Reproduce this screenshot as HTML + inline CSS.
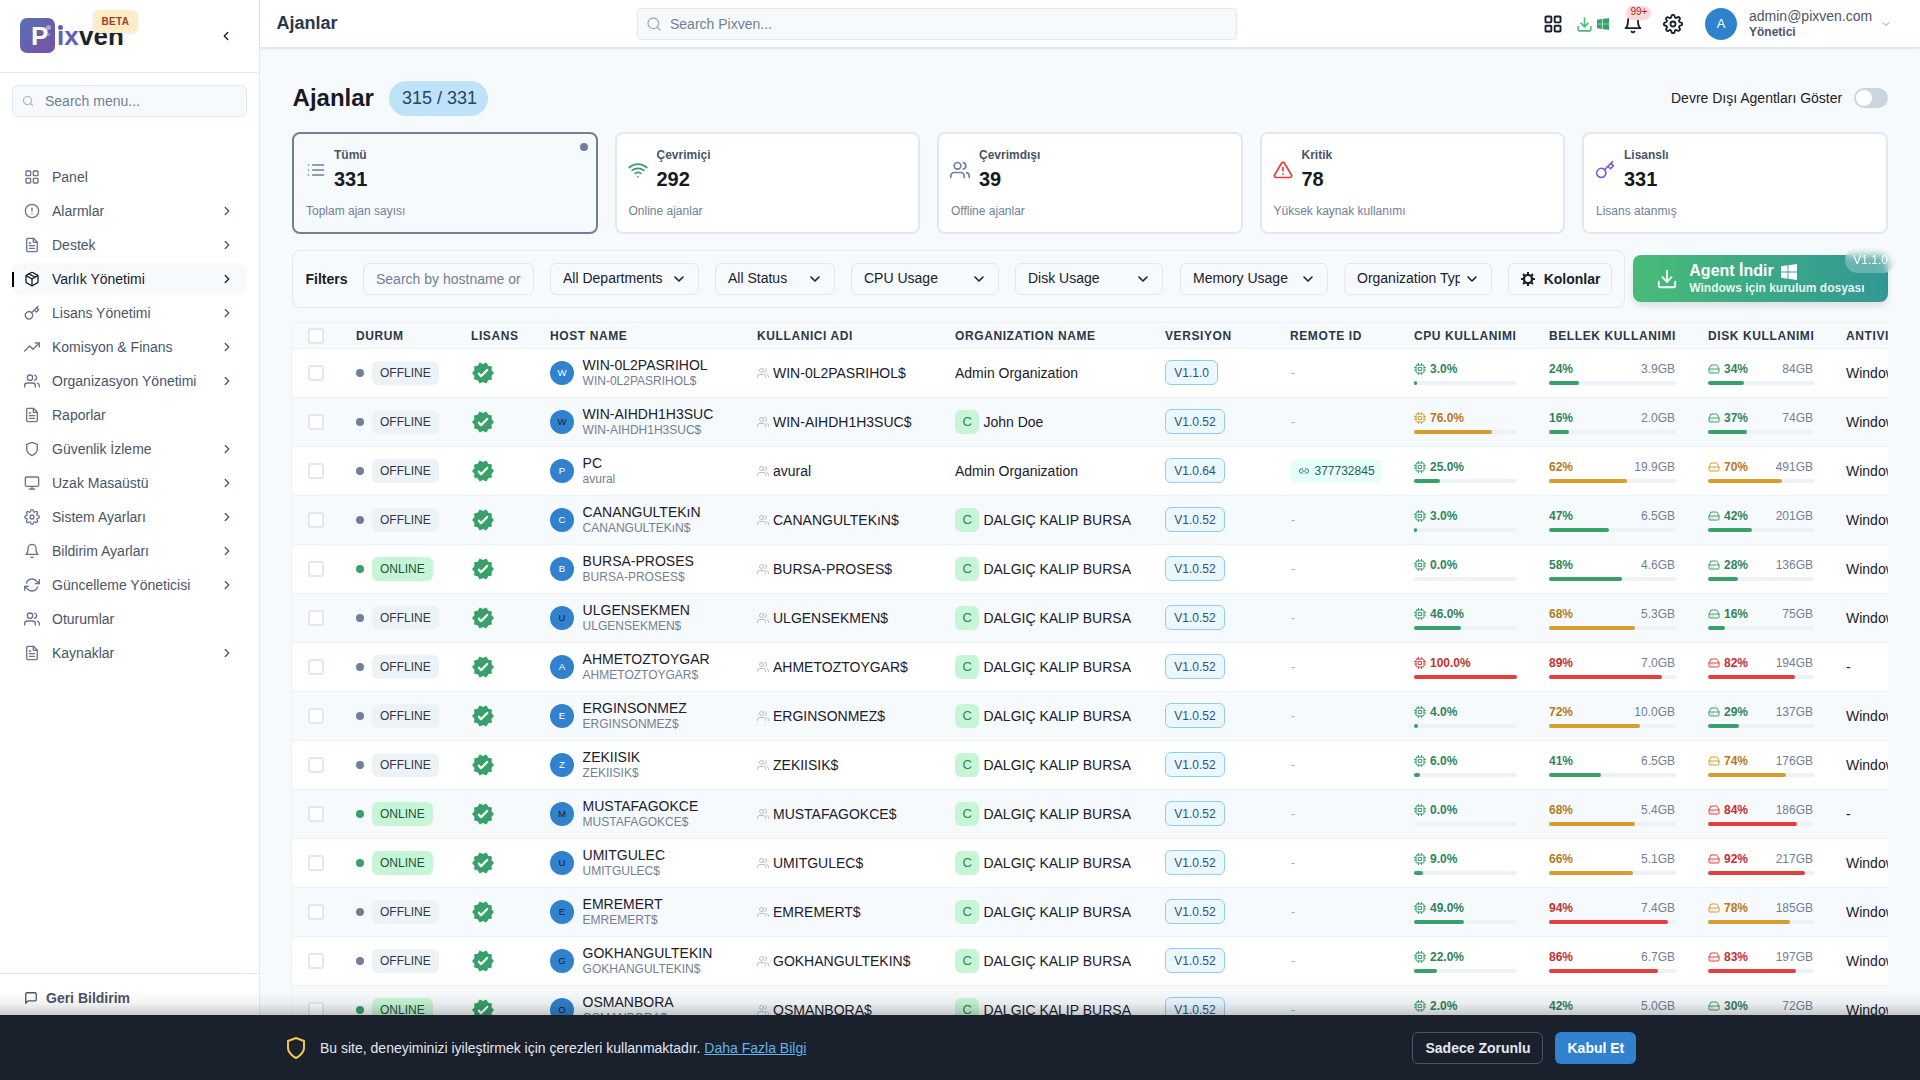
<!DOCTYPE html>
<html><head><meta charset="utf-8">
<style>
*{box-sizing:border-box;margin:0;padding:0}
html,body{width:1920px;height:1080px;overflow:hidden}
body{font-family:"Liberation Sans",sans-serif;background:#f7fafc;color:#1a202c;position:relative}
.a{position:absolute;display:block}
.t{position:absolute;white-space:nowrap}
.b{position:absolute}
</style></head><body>

<div class="b" style="left:0;top:0;width:260px;height:1080px;background:#fff;border-right:1px solid #e2e8f0"></div>
<div class="b" style="left:20px;top:18px;width:35px;height:35px;border-radius:7px;background:linear-gradient(135deg,#5a70b8 0%,#7551a2 100%)"></div>
<div class="t" style="left:31px;top:22.99px;font-size:26px;line-height:26px;font-weight:700;color:#fff;">P</div>
<div class="b" style="left:46px;top:25px;width:5px;height:5px;border-radius:50%;background:rgba(255,255,255,.45)"></div>
<div class="b" style="left:47px;top:33px;width:3px;height:3px;border-radius:50%;background:rgba(255,255,255,.3)"></div>
<div class="t" style="left:57px;top:22.99px;font-size:26px;line-height:26px;font-weight:700;color:#222;letter-spacing:0.1px"><span style="color:#5b62b5">ıx</span><span style="color:#232323">ven</span></div>
<div class="b" style="left:58.2px;top:25.2px;width:4.6px;height:4.6px;border-radius:50%;background:#5b62b5"></div>
<div class="b" style="left:93px;top:10px;width:45px;height:23px;border-radius:6px;background:#feebc8;box-shadow:0 1px 3px rgba(0,0,0,.08)"></div>
<div class="t" style="left:101.5px;top:16.54px;font-size:10px;line-height:10px;font-weight:700;color:#9c4221;letter-spacing:0.3px">BETA</div>
<svg class="a" style="left:219px;top:29px;" width="14" height="14" viewBox="0 0 24 24" fill="none" stroke="#1a202c" stroke-width="2.4" stroke-linecap="round" stroke-linejoin="round"><path d="M15 18l-6-6 6-6"/></svg>
<div class="b" style="left:0;top:72px;width:259px;height:1px;background:#e2e8f0"></div>
<div class="b" style="left:12px;top:85px;width:235px;height:32px;border:1px solid #e2e8f0;border-radius:6px;background:#f7fafc"></div>
<svg class="a" style="left:22px;top:95px;" width="12" height="12" viewBox="0 0 24 24" fill="none" stroke="#a0aec0" stroke-width="2.2" stroke-linecap="round" stroke-linejoin="round"><circle cx="11" cy="11" r="8"/><path d="M21 21l-4.35-4.35"/></svg>
<div class="t" style="left:45px;top:94.15px;font-size:14px;line-height:14px;font-weight:400;color:#718096;">Search menu...</div>
<svg class="a" style="left:24px;top:169px;" width="16" height="16" viewBox="0 0 24 24" fill="none" stroke="#66758f" stroke-width="2" stroke-linecap="round" stroke-linejoin="round"><rect x="3" y="3" width="7" height="7" rx="1"/><rect x="14" y="3" width="7" height="7" rx="1"/><rect x="14" y="14" width="7" height="7" rx="1"/><rect x="3" y="14" width="7" height="7" rx="1"/></svg>
<div class="t" style="left:52px;top:170.15px;font-size:14px;line-height:14px;font-weight:400;color:#4a5568;">Panel</div>
<svg class="a" style="left:24px;top:203px;" width="16" height="16" viewBox="0 0 24 24" fill="none" stroke="#66758f" stroke-width="2" stroke-linecap="round" stroke-linejoin="round"><circle cx="12" cy="12" r="10"/><path d="M12 8v4"/><path d="M12 16h.01"/></svg>
<div class="t" style="left:52px;top:204.15px;font-size:14px;line-height:14px;font-weight:400;color:#4a5568;">Alarmlar</div>
<svg class="a" style="left:220px;top:204px;" width="14" height="14" viewBox="0 0 24 24" fill="none" stroke="#4a5568" stroke-width="2.2" stroke-linecap="round" stroke-linejoin="round"><path d="M9 18l6-6-6-6"/></svg>
<svg class="a" style="left:24px;top:237px;" width="16" height="16" viewBox="0 0 24 24" fill="none" stroke="#66758f" stroke-width="2" stroke-linecap="round" stroke-linejoin="round"><path d="M14 2H6a2 2 0 0 0-2 2v16a2 2 0 0 0 2 2h12a2 2 0 0 0 2-2V8z"/><path d="M14 2v6h6"/><path d="M16 13H8"/><path d="M16 17H8"/><path d="M10 9H8"/></svg>
<div class="t" style="left:52px;top:238.15px;font-size:14px;line-height:14px;font-weight:400;color:#4a5568;">Destek</div>
<svg class="a" style="left:220px;top:238px;" width="14" height="14" viewBox="0 0 24 24" fill="none" stroke="#4a5568" stroke-width="2.2" stroke-linecap="round" stroke-linejoin="round"><path d="M9 18l6-6-6-6"/></svg>
<div class="b" style="left:12px;top:263px;width:235px;height:32px;border-radius:8px;background:#f7fafc"></div>
<div class="b" style="left:12px;top:272px;width:2px;height:15px;background:#000"></div>
<svg class="a" style="left:24px;top:271px;" width="16" height="16" viewBox="0 0 24 24" fill="none" stroke="#1a202c" stroke-width="2" stroke-linecap="round" stroke-linejoin="round"><path d="M16.5 9.4l-9-5.19"/><path d="M21 16V8a2 2 0 0 0-1-1.73l-7-4a2 2 0 0 0-2 0l-7 4A2 2 0 0 0 3 8v8a2 2 0 0 0 1 1.73l7 4a2 2 0 0 0 2 0l7-4A2 2 0 0 0 21 16z"/><path d="M3.27 6.96L12 12.01l8.73-5.05"/><path d="M12 22.08V12"/></svg>
<div class="t" style="left:52px;top:272.15px;font-size:14px;line-height:14px;font-weight:400;color:#1a202c;">Varlık Yönetimi</div>
<svg class="a" style="left:220px;top:272px;" width="14" height="14" viewBox="0 0 24 24" fill="none" stroke="#1a202c" stroke-width="2.2" stroke-linecap="round" stroke-linejoin="round"><path d="M9 18l6-6-6-6"/></svg>
<svg class="a" style="left:24px;top:305px;" width="16" height="16" viewBox="0 0 24 24" fill="none" stroke="#66758f" stroke-width="2" stroke-linecap="round" stroke-linejoin="round"><path d="M21 2l-2 2m-7.61 7.61a5.5 5.5 0 1 1-7.778 7.778 5.5 5.5 0 0 1 7.777-7.777zm0 0L15.5 7.5m0 0l3 3L22 7l-3-3m-3.5 3.5L19 4"/></svg>
<div class="t" style="left:52px;top:306.15px;font-size:14px;line-height:14px;font-weight:400;color:#4a5568;">Lisans Yönetimi</div>
<svg class="a" style="left:220px;top:306px;" width="14" height="14" viewBox="0 0 24 24" fill="none" stroke="#4a5568" stroke-width="2.2" stroke-linecap="round" stroke-linejoin="round"><path d="M9 18l6-6-6-6"/></svg>
<svg class="a" style="left:24px;top:339px;" width="16" height="16" viewBox="0 0 24 24" fill="none" stroke="#66758f" stroke-width="2" stroke-linecap="round" stroke-linejoin="round"><path d="M23 6l-9.5 9.5-5-5L1 18"/><path d="M17 6h6v6"/></svg>
<div class="t" style="left:52px;top:340.15px;font-size:14px;line-height:14px;font-weight:400;color:#4a5568;">Komisyon &amp; Finans</div>
<svg class="a" style="left:220px;top:340px;" width="14" height="14" viewBox="0 0 24 24" fill="none" stroke="#4a5568" stroke-width="2.2" stroke-linecap="round" stroke-linejoin="round"><path d="M9 18l6-6-6-6"/></svg>
<svg class="a" style="left:24px;top:373px;" width="16" height="16" viewBox="0 0 24 24" fill="none" stroke="#66758f" stroke-width="2" stroke-linecap="round" stroke-linejoin="round"><path d="M17 21v-2a4 4 0 0 0-4-4H5a4 4 0 0 0-4 4v2"/><circle cx="9" cy="7" r="4"/><path d="M23 21v-2a4 4 0 0 0-3-3.87"/><path d="M16 3.13a4 4 0 0 1 0 7.75"/></svg>
<div class="t" style="left:52px;top:374.15px;font-size:14px;line-height:14px;font-weight:400;color:#4a5568;">Organizasyon Yönetimi</div>
<svg class="a" style="left:220px;top:374px;" width="14" height="14" viewBox="0 0 24 24" fill="none" stroke="#4a5568" stroke-width="2.2" stroke-linecap="round" stroke-linejoin="round"><path d="M9 18l6-6-6-6"/></svg>
<svg class="a" style="left:24px;top:407px;" width="16" height="16" viewBox="0 0 24 24" fill="none" stroke="#66758f" stroke-width="2" stroke-linecap="round" stroke-linejoin="round"><path d="M14 2H6a2 2 0 0 0-2 2v16a2 2 0 0 0 2 2h12a2 2 0 0 0 2-2V8z"/><path d="M14 2v6h6"/><path d="M16 13H8"/><path d="M16 17H8"/><path d="M10 9H8"/></svg>
<div class="t" style="left:52px;top:408.15px;font-size:14px;line-height:14px;font-weight:400;color:#4a5568;">Raporlar</div>
<svg class="a" style="left:24px;top:441px;" width="16" height="16" viewBox="0 0 24 24" fill="none" stroke="#66758f" stroke-width="2" stroke-linecap="round" stroke-linejoin="round"><path d="M12 22s8-4 8-10V5l-8-3-8 3v7c0 6 8 10 8 10z"/></svg>
<div class="t" style="left:52px;top:442.15px;font-size:14px;line-height:14px;font-weight:400;color:#4a5568;">Güvenlik İzleme</div>
<svg class="a" style="left:220px;top:442px;" width="14" height="14" viewBox="0 0 24 24" fill="none" stroke="#4a5568" stroke-width="2.2" stroke-linecap="round" stroke-linejoin="round"><path d="M9 18l6-6-6-6"/></svg>
<svg class="a" style="left:24px;top:475px;" width="16" height="16" viewBox="0 0 24 24" fill="none" stroke="#66758f" stroke-width="2" stroke-linecap="round" stroke-linejoin="round"><rect x="2" y="3" width="20" height="14" rx="2"/><path d="M8 21h8"/><path d="M12 17v4"/></svg>
<div class="t" style="left:52px;top:476.15px;font-size:14px;line-height:14px;font-weight:400;color:#4a5568;">Uzak Masaüstü</div>
<svg class="a" style="left:220px;top:476px;" width="14" height="14" viewBox="0 0 24 24" fill="none" stroke="#4a5568" stroke-width="2.2" stroke-linecap="round" stroke-linejoin="round"><path d="M9 18l6-6-6-6"/></svg>
<svg class="a" style="left:24px;top:509px;" width="16" height="16" viewBox="0 0 24 24" fill="none" stroke="#66758f" stroke-width="2" stroke-linecap="round" stroke-linejoin="round"><circle cx="12" cy="12" r="3"/><path d="M19.4 15a1.65 1.65 0 0 0 .33 1.820l.06.06a2 2 0 0 1 0 2.83 2 2 0 0 1-2.83 0l-.06-.06a1.65 1.65 0 0 0-1.82-.33 1.65 1.65 0 0 0-1 1.51V21a2 2 0 0 1-2 2 2 2 0 0 1-2-2v-.09A1.65 1.65 0 0 0 9 19.4a1.65 1.65 0 0 0-1.82.33l-.06.06a2 2 0 0 1-2.83 0 2 2 0 0 1 0-2.83l.06-.06a1.650 1.65 0 0 0 .33-1.82 1.65 1.65 0 0 0-1.51-1H3a2 2 0 0 1-2-2 2 2 0 0 1 2-2h.09A1.65 1.65 0 0 0 4.600 9a1.65 1.65 0 0 0-.33-1.82l-.06-.06a2 2 0 0 1 0-2.83 2 2 0 0 1 2.830 0l.06.06a1.65 1.65 0 0 0 1.82.33H9a1.65 1.65 0 0 0 1-1.51V3a2 2 0 0 1 2-2 2 2 0 0 1 2 2v.09a1.65 1.65 0 0 0 1 1.51 1.65 1.65 0 0 0 1.82-.33l.06-.06a2 2 0 0 1 2.83 0 2 2 0 0 1 0 2.83l-.06.06a1.65 1.65 0 0 0-.33 1.82V9a1.65 1.65 0 0 0 1.51 1H21a2 2 0 0 1 2 2 2 2 0 0 1-2 2h-.09a1.65 1.65 0 0 0-1.51 1z"/></svg>
<div class="t" style="left:52px;top:510.15px;font-size:14px;line-height:14px;font-weight:400;color:#4a5568;">Sistem Ayarları</div>
<svg class="a" style="left:220px;top:510px;" width="14" height="14" viewBox="0 0 24 24" fill="none" stroke="#4a5568" stroke-width="2.2" stroke-linecap="round" stroke-linejoin="round"><path d="M9 18l6-6-6-6"/></svg>
<svg class="a" style="left:24px;top:543px;" width="16" height="16" viewBox="0 0 24 24" fill="none" stroke="#66758f" stroke-width="2" stroke-linecap="round" stroke-linejoin="round"><path d="M18 8A6 6 0 0 0 6 8c0 7-3 9-3 9h18s-3-2-3-9"/><path d="M13.73 21a2 2 0 0 1-3.46 0"/></svg>
<div class="t" style="left:52px;top:544.15px;font-size:14px;line-height:14px;font-weight:400;color:#4a5568;">Bildirim Ayarları</div>
<svg class="a" style="left:220px;top:544px;" width="14" height="14" viewBox="0 0 24 24" fill="none" stroke="#4a5568" stroke-width="2.2" stroke-linecap="round" stroke-linejoin="round"><path d="M9 18l6-6-6-6"/></svg>
<svg class="a" style="left:24px;top:577px;" width="16" height="16" viewBox="0 0 24 24" fill="none" stroke="#66758f" stroke-width="2" stroke-linecap="round" stroke-linejoin="round"><path d="M23 4v6h-6"/><path d="M1 20v-6h6"/><path d="M3.51 9a9 9 0 0 1 14.85-3.36L23 10M1 14l4.64 4.36A9 9 0 0 0 20.49 15"/></svg>
<div class="t" style="left:52px;top:578.15px;font-size:14px;line-height:14px;font-weight:400;color:#4a5568;">Güncelleme Yöneticisi</div>
<svg class="a" style="left:220px;top:578px;" width="14" height="14" viewBox="0 0 24 24" fill="none" stroke="#4a5568" stroke-width="2.2" stroke-linecap="round" stroke-linejoin="round"><path d="M9 18l6-6-6-6"/></svg>
<svg class="a" style="left:24px;top:611px;" width="16" height="16" viewBox="0 0 24 24" fill="none" stroke="#66758f" stroke-width="2" stroke-linecap="round" stroke-linejoin="round"><path d="M17 21v-2a4 4 0 0 0-4-4H5a4 4 0 0 0-4 4v2"/><circle cx="9" cy="7" r="4"/><path d="M23 21v-2a4 4 0 0 0-3-3.87"/><path d="M16 3.13a4 4 0 0 1 0 7.75"/></svg>
<div class="t" style="left:52px;top:612.15px;font-size:14px;line-height:14px;font-weight:400;color:#4a5568;">Oturumlar</div>
<svg class="a" style="left:24px;top:645px;" width="16" height="16" viewBox="0 0 24 24" fill="none" stroke="#66758f" stroke-width="2" stroke-linecap="round" stroke-linejoin="round"><path d="M14 2H6a2 2 0 0 0-2 2v16a2 2 0 0 0 2 2h12a2 2 0 0 0 2-2V8z"/><path d="M14 2v6h6"/><path d="M16 13H8"/><path d="M16 17H8"/><path d="M10 9H8"/></svg>
<div class="t" style="left:52px;top:646.15px;font-size:14px;line-height:14px;font-weight:400;color:#4a5568;">Kaynaklar</div>
<svg class="a" style="left:220px;top:646px;" width="14" height="14" viewBox="0 0 24 24" fill="none" stroke="#4a5568" stroke-width="2.2" stroke-linecap="round" stroke-linejoin="round"><path d="M9 18l6-6-6-6"/></svg>
<div class="b" style="left:0;top:973px;width:259px;height:1px;background:#e2e8f0"></div>
<svg class="a" style="left:24px;top:991px;" width="14" height="14" viewBox="0 0 24 24" fill="none" stroke="#4a5568" stroke-width="2.2" stroke-linecap="round" stroke-linejoin="round"><path d="M21 15a2 2 0 0 1-2 2H7l-4 4V5a2 2 0 0 1 2-2h14a2 2 0 0 1 2 2z"/></svg>
<div class="t" style="left:46px;top:991.15px;font-size:14px;line-height:14px;font-weight:700;color:#4a5568;">Geri Bildirim</div>
<div class="b" style="left:260px;top:0;width:1660px;height:48px;background:#fff;border-bottom:1px solid #e2e8f0;box-shadow:0 1px 2px rgba(0,0,0,.09)"></div>
<div class="t" style="left:276.5px;top:13.96px;font-size:18px;line-height:18px;font-weight:700;color:#2d3748;">Ajanlar</div>
<div class="b" style="left:637px;top:8px;width:600px;height:32px;border:1px solid #e2e8f0;border-radius:4px;background:#f7fafc"></div>
<svg class="a" style="left:646px;top:16px;" width="16" height="16" viewBox="0 0 24 24" fill="none" stroke="#a0aec0" stroke-width="2" stroke-linecap="round" stroke-linejoin="round"><circle cx="11" cy="11" r="8"/><path d="M21 21l-4.35-4.35"/></svg>
<div class="t" style="left:670px;top:17.15px;font-size:14px;line-height:14px;font-weight:400;color:#718096;">Search Pixven...</div>
<svg class="a" style="left:1543px;top:14.3px;" width="20" height="20" viewBox="0 0 24 24" fill="none" stroke="#1a202c" stroke-width="2.3" stroke-linecap="round" stroke-linejoin="round"><rect x="3" y="3" width="7" height="7" rx="1"/><rect x="14" y="3" width="7" height="7" rx="1"/><rect x="14" y="14" width="7" height="7" rx="1"/><rect x="3" y="14" width="7" height="7" rx="1"/></svg>
<svg class="a" style="left:1576px;top:16px;" width="17" height="17" viewBox="0 0 24 24" fill="none" stroke="#48bb78" stroke-width="2.2" stroke-linecap="round" stroke-linejoin="round"><path d="M21 15v4a2 2 0 0 1-2 2H5a2 2 0 0 1-2-2v-4"/><path d="M7 10l5 5 5-5"/><path d="M12 15V3"/></svg>
<svg class="a" style="left:1597px;top:18px" width="12" height="12" viewBox="0 0 12 12"><path fill="#38a169" d="M0 1.7L4.9 1v4.7H0zM5.6.9L12 0v5.7H5.6zM0 6.3h4.9V11L0 10.3zM5.6 6.3H12V12l-6.4-.9z"/></svg>
<svg class="a" style="left:1623px;top:14.1px;" width="20" height="20" viewBox="0 0 24 24" fill="none" stroke="#1a202c" stroke-width="2.2" stroke-linecap="round" stroke-linejoin="round"><path d="M18 8A6 6 0 0 0 6 8c0 7-3 9-3 9h18s-3-2-3-9"/><path d="M13.73 21a2 2 0 0 1-3.46 0"/></svg>
<div class="b" style="left:1626px;top:6px;width:25px;height:14px;border-radius:7px;background:#fed7d7"></div>
<div class="t" style="left:1630.5px;top:7.34px;font-size:10px;line-height:10px;font-weight:400;color:#9b2c2c;">99+</div>
<svg class="a" style="left:1663px;top:14px;" width="20" height="20" viewBox="0 0 24 24" fill="none" stroke="#1a202c" stroke-width="2.2" stroke-linecap="round" stroke-linejoin="round"><circle cx="12" cy="12" r="3"/><path d="M19.4 15a1.65 1.65 0 0 0 .33 1.820l.06.06a2 2 0 0 1 0 2.83 2 2 0 0 1-2.83 0l-.06-.06a1.65 1.65 0 0 0-1.82-.33 1.65 1.65 0 0 0-1 1.51V21a2 2 0 0 1-2 2 2 2 0 0 1-2-2v-.09A1.65 1.65 0 0 0 9 19.4a1.65 1.65 0 0 0-1.82.33l-.06.06a2 2 0 0 1-2.83 0 2 2 0 0 1 0-2.83l.06-.06a1.650 1.65 0 0 0 .33-1.82 1.65 1.65 0 0 0-1.51-1H3a2 2 0 0 1-2-2 2 2 0 0 1 2-2h.09A1.65 1.65 0 0 0 4.600 9a1.65 1.65 0 0 0-.33-1.82l-.06-.06a2 2 0 0 1 0-2.83 2 2 0 0 1 2.830 0l.06.06a1.65 1.65 0 0 0 1.82.33H9a1.65 1.65 0 0 0 1-1.51V3a2 2 0 0 1 2-2 2 2 0 0 1 2 2v.09a1.65 1.65 0 0 0 1 1.51 1.65 1.65 0 0 0 1.82-.33l.06-.06a2 2 0 0 1 2.83 0 2 2 0 0 1 0 2.83l-.06.06a1.65 1.65 0 0 0-.33 1.82V9a1.65 1.65 0 0 0 1.51 1H21a2 2 0 0 1 2 2 2 2 0 0 1-2 2h-.09a1.65 1.65 0 0 0-1.51 1z"/></svg>
<div class="b" style="left:1705px;top:8px;width:32px;height:32px;border-radius:50%;background:#3182ce"></div>
<div class="t" style="left:1716.8px;top:16.50px;font-size:13px;line-height:13px;font-weight:400;color:#fff;">A</div>
<div class="t" style="left:1749px;top:9.15px;font-size:14px;line-height:14px;font-weight:400;color:#4a5568;">admin@pixven.com</div>
<div class="t" style="left:1749px;top:25.54px;font-size:12px;line-height:12px;font-weight:700;color:#4a5568;">Yönetici</div>
<svg class="a" style="left:1880px;top:18px;" width="12" height="12" viewBox="0 0 24 24" fill="none" stroke="#718096" stroke-width="1.6" stroke-linecap="round" stroke-linejoin="round"><path d="M6 9l6 6 6-6"/></svg>
<div class="t" style="left:292.6px;top:85.68px;font-size:24px;line-height:24px;font-weight:700;color:#171923;">Ajanlar</div>
<div class="b" style="left:389px;top:81px;width:99px;height:35px;border-radius:18px;background:#bee3f8"></div>
<div class="t" style="left:402px;top:88.76px;font-size:18px;line-height:18px;font-weight:400;color:#2a4365;">315 / 331</div>
<div class="t" style="left:1671px;top:91.15px;font-size:14px;line-height:14px;font-weight:400;color:#1a202c;">Devre Dışı Agentları Göster</div>
<div class="b" style="left:1854px;top:88px;width:34px;height:20px;border-radius:10px;background:#cbd5e0"></div>
<div class="b" style="left:1856px;top:90px;width:16px;height:16px;border-radius:50%;background:#fff"></div>
<div class="b" style="left:292.0px;top:132px;width:305.5px;height:101.5px;border:2px solid #718096;border-radius:8px;background:#f7fafc"></div>
<div class="b" style="left:580.0px;top:143px;width:8px;height:8px;border-radius:50%;background:#718096"></div>
<svg class="a" style="left:306.0px;top:160px;" width="20" height="20" viewBox="0 0 24 24" fill="none" stroke="#718096" stroke-width="2" stroke-linecap="round" stroke-linejoin="round"><path d="M8 6h13"/><path d="M8 12h13"/><path d="M8 18h13"/><path d="M3 6h.01"/><path d="M3 12h.01"/><path d="M3 18h.01"/></svg>
<div class="t" style="left:334.0px;top:148.84px;font-size:12px;line-height:12px;font-weight:700;color:#4a5568;">Tümü</div>
<div class="t" style="left:334.0px;top:169.07px;font-size:20px;line-height:20px;font-weight:700;color:#171923;">331</div>
<div class="t" style="left:306.0px;top:204.54px;font-size:12px;line-height:12px;font-weight:400;color:#718096;">Toplam ajan sayısı</div>
<div class="b" style="left:614.5px;top:132px;width:305.5px;height:101.5px;border:2px solid #e2e8f0;border-radius:8px;background:#fff"></div>
<svg class="a" style="left:627.5px;top:160px;" width="20" height="20" viewBox="0 0 24 24" fill="none" stroke="#38a169" stroke-width="2" stroke-linecap="round" stroke-linejoin="round"><path d="M5 12.55a11 11 0 0 1 14.08 0"/><path d="M1.42 9a16 16 0 0 1 21.16 0"/><path d="M8.53 16.11a6 6 0 0 1 6.95 0"/><path d="M12 20h.01"/></svg>
<div class="t" style="left:656.5px;top:148.84px;font-size:12px;line-height:12px;font-weight:700;color:#4a5568;">Çevrimiçi</div>
<div class="t" style="left:656.5px;top:169.07px;font-size:20px;line-height:20px;font-weight:700;color:#171923;">292</div>
<div class="t" style="left:628.5px;top:204.54px;font-size:12px;line-height:12px;font-weight:400;color:#718096;">Online ajanlar</div>
<div class="b" style="left:937.0px;top:132px;width:305.5px;height:101.5px;border:2px solid #e2e8f0;border-radius:8px;background:#fff"></div>
<svg class="a" style="left:950.0px;top:160px;" width="20" height="20" viewBox="0 0 24 24" fill="none" stroke="#718096" stroke-width="2" stroke-linecap="round" stroke-linejoin="round"><path d="M17 21v-2a4 4 0 0 0-4-4H5a4 4 0 0 0-4 4v2"/><circle cx="9" cy="7" r="4"/><path d="M23 21v-2a4 4 0 0 0-3-3.87"/><path d="M16 3.13a4 4 0 0 1 0 7.75"/></svg>
<div class="t" style="left:979.0px;top:148.84px;font-size:12px;line-height:12px;font-weight:700;color:#4a5568;">Çevrimdışı</div>
<div class="t" style="left:979.0px;top:169.07px;font-size:20px;line-height:20px;font-weight:700;color:#171923;">39</div>
<div class="t" style="left:951.0px;top:204.54px;font-size:12px;line-height:12px;font-weight:400;color:#718096;">Offline ajanlar</div>
<div class="b" style="left:1259.5px;top:132px;width:305.5px;height:101.5px;border:2px solid #e2e8f0;border-radius:8px;background:#fff"></div>
<svg class="a" style="left:1272.5px;top:160px;" width="20" height="20" viewBox="0 0 24 24" fill="none" stroke="#e53e3e" stroke-width="2" stroke-linecap="round" stroke-linejoin="round"><path d="M10.29 3.86L1.82 18a2 2 0 0 0 1.71 3h16.94a2 2 0 0 0 1.71-3L13.71 3.86a2 2 0 0 0-3.42 0z"/><path d="M12 9v4"/><path d="M12 17h.01"/></svg>
<div class="t" style="left:1301.5px;top:148.84px;font-size:12px;line-height:12px;font-weight:700;color:#4a5568;">Kritik</div>
<div class="t" style="left:1301.5px;top:169.07px;font-size:20px;line-height:20px;font-weight:700;color:#171923;">78</div>
<div class="t" style="left:1273.5px;top:204.54px;font-size:12px;line-height:12px;font-weight:400;color:#718096;">Yüksek kaynak kullanımı</div>
<div class="b" style="left:1582.0px;top:132px;width:305.5px;height:101.5px;border:2px solid #e2e8f0;border-radius:8px;background:#fff"></div>
<svg class="a" style="left:1595.0px;top:160px;" width="20" height="20" viewBox="0 0 24 24" fill="none" stroke="#805ad5" stroke-width="2" stroke-linecap="round" stroke-linejoin="round"><path d="M21 2l-2 2m-7.61 7.61a5.5 5.5 0 1 1-7.778 7.778 5.5 5.5 0 0 1 7.777-7.777zm0 0L15.5 7.5m0 0l3 3L22 7l-3-3m-3.5 3.5L19 4"/></svg>
<div class="t" style="left:1624.0px;top:148.84px;font-size:12px;line-height:12px;font-weight:700;color:#4a5568;">Lisanslı</div>
<div class="t" style="left:1624.0px;top:169.07px;font-size:20px;line-height:20px;font-weight:700;color:#171923;">331</div>
<div class="t" style="left:1596.0px;top:204.54px;font-size:12px;line-height:12px;font-weight:400;color:#718096;">Lisans atanmış</div>
<div class="b" style="left:292px;top:250px;width:1333px;height:57.5px;border:1px solid #e2e8f0;border-radius:8px;background:#f7fafc"></div>
<div class="t" style="left:305.5px;top:272.35px;font-size:14px;line-height:14px;font-weight:700;color:#1a202c;">Filters</div>
<div class="b" style="left:363px;top:263px;width:171px;height:32px;border:1px solid #e2e8f0;border-radius:6px"></div>
<div class="t" style="left:376px;top:272.15px;font-size:14px;line-height:14px;font-weight:400;color:#718096;">Search by hostname or</div>
<div class="b" style="left:550px;top:263px;width:149px;height:32px;border:1px solid #e2e8f0;border-radius:6px"></div>
<div class="t" style="left:563px;top:268.15px;width:104px;overflow:hidden;font-size:14px;line-height:20px;color:#1a202c">All Departments</div>
<svg class="a" style="left:671px;top:271px;" width="16" height="16" viewBox="0 0 24 24" fill="none" stroke="#1a202c" stroke-width="2.4" stroke-linecap="round" stroke-linejoin="round"><path d="M6 9l6 6 6-6"/></svg>
<div class="b" style="left:715px;top:263px;width:120px;height:32px;border:1px solid #e2e8f0;border-radius:6px"></div>
<div class="t" style="left:728px;top:268.15px;width:75px;overflow:hidden;font-size:14px;line-height:20px;color:#1a202c">All Status</div>
<svg class="a" style="left:807px;top:271px;" width="16" height="16" viewBox="0 0 24 24" fill="none" stroke="#1a202c" stroke-width="2.4" stroke-linecap="round" stroke-linejoin="round"><path d="M6 9l6 6 6-6"/></svg>
<div class="b" style="left:851px;top:263px;width:147.5px;height:32px;border:1px solid #e2e8f0;border-radius:6px"></div>
<div class="t" style="left:864px;top:268.15px;width:102.5px;overflow:hidden;font-size:14px;line-height:20px;color:#1a202c">CPU Usage</div>
<svg class="a" style="left:970.5px;top:271px;" width="16" height="16" viewBox="0 0 24 24" fill="none" stroke="#1a202c" stroke-width="2.4" stroke-linecap="round" stroke-linejoin="round"><path d="M6 9l6 6 6-6"/></svg>
<div class="b" style="left:1015px;top:263px;width:148px;height:32px;border:1px solid #e2e8f0;border-radius:6px"></div>
<div class="t" style="left:1028px;top:268.15px;width:103px;overflow:hidden;font-size:14px;line-height:20px;color:#1a202c">Disk Usage</div>
<svg class="a" style="left:1135px;top:271px;" width="16" height="16" viewBox="0 0 24 24" fill="none" stroke="#1a202c" stroke-width="2.4" stroke-linecap="round" stroke-linejoin="round"><path d="M6 9l6 6 6-6"/></svg>
<div class="b" style="left:1180px;top:263px;width:147.5px;height:32px;border:1px solid #e2e8f0;border-radius:6px"></div>
<div class="t" style="left:1193px;top:268.15px;width:102.5px;overflow:hidden;font-size:14px;line-height:20px;color:#1a202c">Memory Usage</div>
<svg class="a" style="left:1299.5px;top:271px;" width="16" height="16" viewBox="0 0 24 24" fill="none" stroke="#1a202c" stroke-width="2.4" stroke-linecap="round" stroke-linejoin="round"><path d="M6 9l6 6 6-6"/></svg>
<div class="b" style="left:1344px;top:263px;width:147.5px;height:32px;border:1px solid #e2e8f0;border-radius:6px"></div>
<div class="t" style="left:1357px;top:268.15px;width:102.5px;overflow:hidden;font-size:14px;line-height:20px;color:#1a202c">Organization Typ</div>
<svg class="a" style="left:1463.5px;top:271px;" width="16" height="16" viewBox="0 0 24 24" fill="none" stroke="#1a202c" stroke-width="2.4" stroke-linecap="round" stroke-linejoin="round"><path d="M6 9l6 6 6-6"/></svg>
<div class="b" style="left:1508px;top:263px;width:104px;height:32px;border:1px solid #e2e8f0;border-radius:6px"></div>
<svg class="a" style="left:1521px;top:272px" width="14" height="14" viewBox="0 0 14 14"><circle cx="7" cy="7" r="4.1" fill="none" stroke="#1a202c" stroke-width="2.4"/><g fill="#1a202c"><rect x="6" y="0" width="2" height="3" transform="rotate(0 7 7)"/><rect x="6" y="0" width="2" height="3" transform="rotate(45 7 7)"/><rect x="6" y="0" width="2" height="3" transform="rotate(90 7 7)"/><rect x="6" y="0" width="2" height="3" transform="rotate(135 7 7)"/><rect x="6" y="0" width="2" height="3" transform="rotate(180 7 7)"/><rect x="6" y="0" width="2" height="3" transform="rotate(225 7 7)"/><rect x="6" y="0" width="2" height="3" transform="rotate(270 7 7)"/><rect x="6" y="0" width="2" height="3" transform="rotate(315 7 7)"/></g></svg>
<div class="t" style="left:1543.7px;top:272.15px;font-size:14px;line-height:14px;font-weight:700;color:#1a202c;">Kolonlar</div>
<div class="b" style="left:1633px;top:255px;width:255px;height:47px;border-radius:8px;background:linear-gradient(90deg,#48bb78 0%,#319795 100%);box-shadow:0 4px 6px rgba(0,0,0,.1)"></div>
<svg class="a" style="left:1656px;top:268px;" width="22" height="22" viewBox="0 0 24 24" fill="none" stroke="#fff" stroke-width="2" stroke-linecap="round" stroke-linejoin="round"><path d="M21 15v4a2 2 0 0 1-2 2H5a2 2 0 0 1-2-2v-4"/><path d="M7 10l5 5 5-5"/><path d="M12 15V3"/></svg>
<div class="t" style="left:1689.3px;top:262.96px;font-size:16px;line-height:16px;font-weight:700;color:#fff;">Agent İndir</div>
<svg class="a" style="left:1781px;top:264px" width="16" height="16" viewBox="0 0 12 12"><path fill="#fff" d="M0 1.7L4.9 1v4.7H0zM5.6.9L12 0v5.7H5.6zM0 6.3h4.9V11L0 10.3zM5.6 6.3H12V12l-6.4-.9z"/></svg>
<div class="t" style="left:1689.3px;top:281.84px;font-size:12px;line-height:12px;font-weight:700;color:rgba(255,255,255,.9);">Windows için kurulum dosyası</div>
<div class="b" style="left:1845px;top:247px;width:51px;height:26px;border-radius:13px;background:rgba(255,255,255,.25);backdrop-filter:blur(4px);-webkit-backdrop-filter:blur(4px)"></div>
<div class="t" style="left:1853.3px;top:253.84px;font-size:12px;line-height:12px;font-weight:400;color:#fff;font-family:"Liberation Mono",monospace;transform:scaleX(.8);transform-origin:0 0">V1.1.0</div>
<div class="b" style="left:0;top:0;width:1888px;height:1080px;overflow:hidden">
<div class="b" style="left:291px;top:322px;width:1700px;height:800px;border:1px solid #edf2f7;border-radius:6px;background:#fff"></div>
<div class="b" style="left:292px;top:323px;width:1700px;height:26px;background:#f7fafc;border-bottom:1px solid #edf2f7"></div>
<div class="b" style="left:308px;top:328px;width:16px;height:16px;border:2px solid #e2e8f0;border-radius:3px;background:#fff"></div>
<div class="t" style="left:356px;top:329.84px;font-size:12px;line-height:12px;font-weight:700;color:#2d3748;letter-spacing:0.6px">DURUM</div>
<div class="t" style="left:471px;top:329.84px;font-size:12px;line-height:12px;font-weight:700;color:#2d3748;letter-spacing:0.6px">LISANS</div>
<div class="t" style="left:550px;top:329.84px;font-size:12px;line-height:12px;font-weight:700;color:#2d3748;letter-spacing:0.6px">HOST NAME</div>
<div class="t" style="left:757px;top:329.84px;font-size:12px;line-height:12px;font-weight:700;color:#2d3748;letter-spacing:0.6px">KULLANICI ADI</div>
<div class="t" style="left:955px;top:329.84px;font-size:12px;line-height:12px;font-weight:700;color:#2d3748;letter-spacing:0.6px">ORGANIZATION NAME</div>
<div class="t" style="left:1165px;top:329.84px;font-size:12px;line-height:12px;font-weight:700;color:#2d3748;letter-spacing:0.6px">VERSIYON</div>
<div class="t" style="left:1290px;top:329.84px;font-size:12px;line-height:12px;font-weight:700;color:#2d3748;letter-spacing:0.6px">REMOTE ID</div>
<div class="t" style="left:1414px;top:329.84px;font-size:12px;line-height:12px;font-weight:700;color:#2d3748;letter-spacing:0.6px">CPU KULLANIMI</div>
<div class="t" style="left:1549px;top:329.84px;font-size:12px;line-height:12px;font-weight:700;color:#2d3748;letter-spacing:0.6px">BELLEK KULLANIMI</div>
<div class="t" style="left:1708px;top:329.84px;font-size:12px;line-height:12px;font-weight:700;color:#2d3748;letter-spacing:0.6px">DISK KULLANIMI</div>
<div class="t" style="left:1846px;top:329.84px;font-size:12px;line-height:12px;font-weight:700;color:#2d3748;letter-spacing:0.6px">ANTIVIRÜS</div>
<div class="b" style="left:292px;top:349px;width:1700px;height:49px;background:#fff;border-bottom:1px solid #edf2f7"></div>
<div class="b" style="left:308px;top:364.5px;width:16px;height:16px;border:2px solid #e2e8f0;border-radius:3px;background:#fff"></div>
<div class="b" style="left:356px;top:368.5px;width:8px;height:8px;border-radius:50%;background:#718096"></div>
<div class="b" style="left:372px;top:360.5px;width:67px;height:24px;border-radius:6px;background:#edf2f7"></div>
<div class="t" style="left:380px;top:366.84px;font-size:12px;line-height:12px;font-weight:400;color:#2d3748;">OFFLINE</div>
<svg class="a" style="left:471px;top:361.0px" width="24" height="24" viewBox="0 0 24 24"><path fill="#38a169" d="M23 12l-2.44-2.79.34-3.69-3.61-.82-1.89-3.2L12 2.96 8.6 1.5 6.71 4.69 3.1 5.5l.34 3.7L1 12l2.44 2.79-.34 3.7 3.61.82L8.6 22.5l3.4-1.47 3.4 1.46 1.89-3.19 3.61-.82-.34-3.69L23 12z"/><path fill="none" stroke="#fff" stroke-width="2.2" stroke-linecap="round" stroke-linejoin="round" d="M7.9 12.7l2.1 2.5 6.2-6.3"/></svg>
<div class="b" style="left:550px;top:360.5px;width:24px;height:24px;border-radius:50%;background:#3182ce"></div>
<div class="t" style="left:550px;top:367.5px;width:24px;text-align:center;font-size:9.6px;line-height:10px;color:#fff">W</div>
<div class="t" style="left:582.6px;top:358.15px;font-size:14px;line-height:14px;font-weight:400;color:#1a202c;">WIN-0L2PASRIHOL</div>
<div class="t" style="left:582.6px;top:374.84px;font-size:12px;line-height:12px;font-weight:400;color:#718096;">WIN-0L2PASRIHOL$</div>
<svg class="a" style="left:757px;top:366.5px;" width="12" height="12" viewBox="0 0 24 24" fill="none" stroke="#a0aec0" stroke-width="1.6" stroke-linecap="round" stroke-linejoin="round"><path d="M17 21v-2a4 4 0 0 0-4-4H5a4 4 0 0 0-4 4v2"/><circle cx="9" cy="7" r="4"/><path d="M23 21v-2a4 4 0 0 0-3-3.87"/><path d="M16 3.13a4 4 0 0 1 0 7.75"/></svg>
<div class="t" style="left:773px;top:365.95px;font-size:14px;line-height:14px;font-weight:400;color:#1a202c;">WIN-0L2PASRIHOL$</div>
<div class="t" style="left:955px;top:365.95px;font-size:14px;line-height:14px;font-weight:400;color:#1a202c;">Admin Organization</div>
<div class="b" style="left:1165px;top:360.0px;width:53px;height:25px;border:1px solid #90cdf4;border-radius:6px;background:#ebf8ff"></div>
<div class="t" style="left:1174.3px;top:366.84px;font-size:12px;line-height:12px;font-weight:400;color:#2c5282;">V1.1.0</div>
<div class="t" style="left:1291px;top:366.84px;font-size:12px;line-height:12px;font-weight:400;color:#a0aec0;">-</div>
<svg class="a" style="left:1414px;top:363.0px;" width="12" height="12" viewBox="0 0 24 24" fill="none" stroke="#38a169" stroke-width="2" stroke-linecap="round" stroke-linejoin="round"><rect x="4" y="4" width="16" height="16" rx="2"/><rect x="9" y="9" width="6" height="6"/><path d="M9 1v3M15 1v3M9 20v3M15 20v3M20 9h3M20 14h3M1 9h3M1 14h3"/></svg>
<div class="t" style="left:1430px;top:362.84px;font-size:12px;line-height:12px;font-weight:700;color:#2f855a;">3.0%</div>
<div class="b" style="left:1414px;top:381.0px;width:102.5px;height:4px;border-radius:2px;background:#edf2f7"></div><div class="b" style="left:1414px;top:381.0px;width:3.1px;height:4px;border-radius:2px;background:#38a169"></div>
<div class="t" style="left:1549px;top:362.84px;font-size:12px;line-height:12px;font-weight:700;color:#2f855a;">24%</div>
<div class="t" style="left:1575px;top:362.84px;width:100px;text-align:right;font-size:12px;line-height:12px;color:#718096">3.9GB</div>
<div class="b" style="left:1549px;top:381.0px;width:126.5px;height:4px;border-radius:2px;background:#edf2f7"></div><div class="b" style="left:1549px;top:381.0px;width:30.4px;height:4px;border-radius:2px;background:#38a169"></div>
<svg class="a" style="left:1708px;top:363.0px;" width="12" height="12" viewBox="0 0 24 24" fill="none" stroke="#38a169" stroke-width="2" stroke-linecap="round" stroke-linejoin="round"><path d="M22 12H2"/><path d="M5.45 5.11L2 12v6a2 2 0 0 0 2 2h16a2 2 0 0 0 2-2v-6l-3.45-6.89A2 2 0 0 0 16.76 4H7.24a2 2 0 0 0-1.79 1.11z"/><path d="M6 16h.01M10 16h.01"/></svg>
<div class="t" style="left:1724px;top:362.84px;font-size:12px;line-height:12px;font-weight:700;color:#2f855a;">34%</div>
<div class="t" style="left:1713px;top:362.84px;width:100px;text-align:right;font-size:12px;line-height:12px;color:#718096">84GB</div>
<div class="b" style="left:1708px;top:381.0px;width:105.5px;height:4px;border-radius:2px;background:#edf2f7"></div><div class="b" style="left:1708px;top:381.0px;width:35.9px;height:4px;border-radius:2px;background:#38a169"></div>
<div class="t" style="left:1846px;top:365.95px;font-size:14px;line-height:14px;font-weight:400;color:#1a202c;">Windows Defender</div>
<div class="b" style="left:292px;top:398px;width:1700px;height:49px;background:#f7fafc;border-bottom:1px solid #edf2f7"></div>
<div class="b" style="left:308px;top:413.5px;width:16px;height:16px;border:2px solid #e2e8f0;border-radius:3px;background:#fff"></div>
<div class="b" style="left:356px;top:417.5px;width:8px;height:8px;border-radius:50%;background:#718096"></div>
<div class="b" style="left:372px;top:409.5px;width:67px;height:24px;border-radius:6px;background:#edf2f7"></div>
<div class="t" style="left:380px;top:415.84px;font-size:12px;line-height:12px;font-weight:400;color:#2d3748;">OFFLINE</div>
<svg class="a" style="left:471px;top:410.0px" width="24" height="24" viewBox="0 0 24 24"><path fill="#38a169" d="M23 12l-2.44-2.79.34-3.69-3.61-.82-1.89-3.2L12 2.96 8.6 1.5 6.71 4.69 3.1 5.5l.34 3.7L1 12l2.44 2.79-.34 3.7 3.61.82L8.6 22.5l3.4-1.47 3.4 1.46 1.89-3.19 3.61-.82-.34-3.69L23 12z"/><path fill="none" stroke="#fff" stroke-width="2.2" stroke-linecap="round" stroke-linejoin="round" d="M7.9 12.7l2.1 2.5 6.2-6.3"/></svg>
<div class="b" style="left:550px;top:409.5px;width:24px;height:24px;border-radius:50%;background:#3182ce"></div>
<div class="t" style="left:550px;top:416.5px;width:24px;text-align:center;font-size:9.6px;line-height:10px;color:#1a202c">W</div>
<div class="t" style="left:582.6px;top:407.15px;font-size:14px;line-height:14px;font-weight:400;color:#1a202c;">WIN-AIHDH1H3SUC</div>
<div class="t" style="left:582.6px;top:423.84px;font-size:12px;line-height:12px;font-weight:400;color:#718096;">WIN-AIHDH1H3SUC$</div>
<svg class="a" style="left:757px;top:415.5px;" width="12" height="12" viewBox="0 0 24 24" fill="none" stroke="#a0aec0" stroke-width="1.6" stroke-linecap="round" stroke-linejoin="round"><path d="M17 21v-2a4 4 0 0 0-4-4H5a4 4 0 0 0-4 4v2"/><circle cx="9" cy="7" r="4"/><path d="M23 21v-2a4 4 0 0 0-3-3.87"/><path d="M16 3.13a4 4 0 0 1 0 7.75"/></svg>
<div class="t" style="left:773px;top:414.95px;font-size:14px;line-height:14px;font-weight:400;color:#1a202c;">WIN-AIHDH1H3SUC$</div>
<div class="b" style="left:955px;top:409.5px;width:24px;height:24px;border-radius:6px;background:#c6f6d5"></div>
<div class="t" style="left:962.5px;top:415.30px;font-size:13px;line-height:13px;font-weight:400;color:#2f855a;">C</div>
<div class="t" style="left:983.4px;top:414.95px;font-size:14px;line-height:14px;font-weight:400;color:#1a202c;">John Doe</div>
<div class="b" style="left:1165px;top:409.0px;width:60px;height:25px;border:1px solid #90cdf4;border-radius:6px;background:#ebf8ff"></div>
<div class="t" style="left:1174.3px;top:415.84px;font-size:12px;line-height:12px;font-weight:400;color:#2c5282;">V1.0.52</div>
<div class="t" style="left:1291px;top:415.84px;font-size:12px;line-height:12px;font-weight:400;color:#a0aec0;">-</div>
<svg class="a" style="left:1414px;top:412.0px;" width="12" height="12" viewBox="0 0 24 24" fill="none" stroke="#d69e2e" stroke-width="2" stroke-linecap="round" stroke-linejoin="round"><rect x="4" y="4" width="16" height="16" rx="2"/><rect x="9" y="9" width="6" height="6"/><path d="M9 1v3M15 1v3M9 20v3M15 20v3M20 9h3M20 14h3M1 9h3M1 14h3"/></svg>
<div class="t" style="left:1430px;top:411.84px;font-size:12px;line-height:12px;font-weight:700;color:#b7791f;">76.0%</div>
<div class="b" style="left:1414px;top:430.0px;width:102.5px;height:4px;border-radius:2px;background:#edf2f7"></div><div class="b" style="left:1414px;top:430.0px;width:77.9px;height:4px;border-radius:2px;background:#d69e2e"></div>
<div class="t" style="left:1549px;top:411.84px;font-size:12px;line-height:12px;font-weight:700;color:#2f855a;">16%</div>
<div class="t" style="left:1575px;top:411.84px;width:100px;text-align:right;font-size:12px;line-height:12px;color:#718096">2.0GB</div>
<div class="b" style="left:1549px;top:430.0px;width:126.5px;height:4px;border-radius:2px;background:#edf2f7"></div><div class="b" style="left:1549px;top:430.0px;width:20.2px;height:4px;border-radius:2px;background:#38a169"></div>
<svg class="a" style="left:1708px;top:412.0px;" width="12" height="12" viewBox="0 0 24 24" fill="none" stroke="#38a169" stroke-width="2" stroke-linecap="round" stroke-linejoin="round"><path d="M22 12H2"/><path d="M5.45 5.11L2 12v6a2 2 0 0 0 2 2h16a2 2 0 0 0 2-2v-6l-3.45-6.89A2 2 0 0 0 16.76 4H7.24a2 2 0 0 0-1.79 1.11z"/><path d="M6 16h.01M10 16h.01"/></svg>
<div class="t" style="left:1724px;top:411.84px;font-size:12px;line-height:12px;font-weight:700;color:#2f855a;">37%</div>
<div class="t" style="left:1713px;top:411.84px;width:100px;text-align:right;font-size:12px;line-height:12px;color:#718096">74GB</div>
<div class="b" style="left:1708px;top:430.0px;width:105.5px;height:4px;border-radius:2px;background:#edf2f7"></div><div class="b" style="left:1708px;top:430.0px;width:39.0px;height:4px;border-radius:2px;background:#38a169"></div>
<div class="t" style="left:1846px;top:414.95px;font-size:14px;line-height:14px;font-weight:400;color:#1a202c;">Windows Defender</div>
<div class="b" style="left:292px;top:447px;width:1700px;height:49px;background:#fff;border-bottom:1px solid #edf2f7"></div>
<div class="b" style="left:308px;top:462.5px;width:16px;height:16px;border:2px solid #e2e8f0;border-radius:3px;background:#fff"></div>
<div class="b" style="left:356px;top:466.5px;width:8px;height:8px;border-radius:50%;background:#718096"></div>
<div class="b" style="left:372px;top:458.5px;width:67px;height:24px;border-radius:6px;background:#edf2f7"></div>
<div class="t" style="left:380px;top:464.84px;font-size:12px;line-height:12px;font-weight:400;color:#2d3748;">OFFLINE</div>
<svg class="a" style="left:471px;top:459.0px" width="24" height="24" viewBox="0 0 24 24"><path fill="#38a169" d="M23 12l-2.44-2.79.34-3.69-3.61-.82-1.89-3.2L12 2.96 8.6 1.5 6.71 4.69 3.1 5.5l.34 3.7L1 12l2.44 2.79-.34 3.7 3.61.82L8.6 22.5l3.4-1.47 3.4 1.46 1.89-3.19 3.61-.82-.34-3.69L23 12z"/><path fill="none" stroke="#fff" stroke-width="2.2" stroke-linecap="round" stroke-linejoin="round" d="M7.9 12.7l2.1 2.5 6.2-6.3"/></svg>
<div class="b" style="left:550px;top:458.5px;width:24px;height:24px;border-radius:50%;background:#3182ce"></div>
<div class="t" style="left:550px;top:465.5px;width:24px;text-align:center;font-size:9.6px;line-height:10px;color:#fff">P</div>
<div class="t" style="left:582.6px;top:456.15px;font-size:14px;line-height:14px;font-weight:400;color:#1a202c;">PC</div>
<div class="t" style="left:582.6px;top:472.84px;font-size:12px;line-height:12px;font-weight:400;color:#718096;">avural</div>
<svg class="a" style="left:757px;top:464.5px;" width="12" height="12" viewBox="0 0 24 24" fill="none" stroke="#a0aec0" stroke-width="1.6" stroke-linecap="round" stroke-linejoin="round"><path d="M17 21v-2a4 4 0 0 0-4-4H5a4 4 0 0 0-4 4v2"/><circle cx="9" cy="7" r="4"/><path d="M23 21v-2a4 4 0 0 0-3-3.87"/><path d="M16 3.13a4 4 0 0 1 0 7.75"/></svg>
<div class="t" style="left:773px;top:463.95px;font-size:14px;line-height:14px;font-weight:400;color:#1a202c;">avural</div>
<div class="t" style="left:955px;top:463.95px;font-size:14px;line-height:14px;font-weight:400;color:#1a202c;">Admin Organization</div>
<div class="b" style="left:1165px;top:458.0px;width:60px;height:25px;border:1px solid #90cdf4;border-radius:6px;background:#ebf8ff"></div>
<div class="t" style="left:1174.3px;top:464.84px;font-size:12px;line-height:12px;font-weight:400;color:#2c5282;">V1.0.64</div>
<div class="b" style="left:1290px;top:458.5px;width:92px;height:24px;border-radius:6px;background:#e6fffa"></div>
<svg class="a" style="left:1299px;top:466.0px;" width="10" height="10" viewBox="0 0 24 24" fill="none" stroke="#2c7a7b" stroke-width="2.4" stroke-linecap="round" stroke-linejoin="round"><path d="M15 7h3a5 5 0 0 1 5 5 5 5 0 0 1-5 5h-3m-6 0H6a5 5 0 0 1-5-5 5 5 0 0 1 5-5h3"/><path d="M8 12h8"/></svg>
<div class="t" style="left:1314.5px;top:464.84px;font-size:12px;line-height:12px;font-weight:400;color:#285e61;">377732845</div>
<svg class="a" style="left:1414px;top:461.0px;" width="12" height="12" viewBox="0 0 24 24" fill="none" stroke="#38a169" stroke-width="2" stroke-linecap="round" stroke-linejoin="round"><rect x="4" y="4" width="16" height="16" rx="2"/><rect x="9" y="9" width="6" height="6"/><path d="M9 1v3M15 1v3M9 20v3M15 20v3M20 9h3M20 14h3M1 9h3M1 14h3"/></svg>
<div class="t" style="left:1430px;top:460.84px;font-size:12px;line-height:12px;font-weight:700;color:#2f855a;">25.0%</div>
<div class="b" style="left:1414px;top:479.0px;width:102.5px;height:4px;border-radius:2px;background:#edf2f7"></div><div class="b" style="left:1414px;top:479.0px;width:25.6px;height:4px;border-radius:2px;background:#38a169"></div>
<div class="t" style="left:1549px;top:460.84px;font-size:12px;line-height:12px;font-weight:700;color:#b7791f;">62%</div>
<div class="t" style="left:1575px;top:460.84px;width:100px;text-align:right;font-size:12px;line-height:12px;color:#718096">19.9GB</div>
<div class="b" style="left:1549px;top:479.0px;width:126.5px;height:4px;border-radius:2px;background:#edf2f7"></div><div class="b" style="left:1549px;top:479.0px;width:78.4px;height:4px;border-radius:2px;background:#d69e2e"></div>
<svg class="a" style="left:1708px;top:461.0px;" width="12" height="12" viewBox="0 0 24 24" fill="none" stroke="#d69e2e" stroke-width="2" stroke-linecap="round" stroke-linejoin="round"><path d="M22 12H2"/><path d="M5.45 5.11L2 12v6a2 2 0 0 0 2 2h16a2 2 0 0 0 2-2v-6l-3.45-6.89A2 2 0 0 0 16.76 4H7.24a2 2 0 0 0-1.79 1.11z"/><path d="M6 16h.01M10 16h.01"/></svg>
<div class="t" style="left:1724px;top:460.84px;font-size:12px;line-height:12px;font-weight:700;color:#b7791f;">70%</div>
<div class="t" style="left:1713px;top:460.84px;width:100px;text-align:right;font-size:12px;line-height:12px;color:#718096">491GB</div>
<div class="b" style="left:1708px;top:479.0px;width:105.5px;height:4px;border-radius:2px;background:#edf2f7"></div><div class="b" style="left:1708px;top:479.0px;width:73.8px;height:4px;border-radius:2px;background:#d69e2e"></div>
<div class="t" style="left:1846px;top:463.95px;font-size:14px;line-height:14px;font-weight:400;color:#1a202c;">Windows Defender</div>
<div class="b" style="left:292px;top:496px;width:1700px;height:49px;background:#f7fafc;border-bottom:1px solid #edf2f7"></div>
<div class="b" style="left:308px;top:511.5px;width:16px;height:16px;border:2px solid #e2e8f0;border-radius:3px;background:#fff"></div>
<div class="b" style="left:356px;top:515.5px;width:8px;height:8px;border-radius:50%;background:#718096"></div>
<div class="b" style="left:372px;top:507.5px;width:67px;height:24px;border-radius:6px;background:#edf2f7"></div>
<div class="t" style="left:380px;top:513.84px;font-size:12px;line-height:12px;font-weight:400;color:#2d3748;">OFFLINE</div>
<svg class="a" style="left:471px;top:508.0px" width="24" height="24" viewBox="0 0 24 24"><path fill="#38a169" d="M23 12l-2.44-2.79.34-3.69-3.61-.82-1.89-3.2L12 2.96 8.6 1.5 6.71 4.69 3.1 5.5l.34 3.7L1 12l2.44 2.79-.34 3.7 3.61.82L8.6 22.5l3.4-1.47 3.4 1.46 1.89-3.19 3.61-.82-.34-3.69L23 12z"/><path fill="none" stroke="#fff" stroke-width="2.2" stroke-linecap="round" stroke-linejoin="round" d="M7.9 12.7l2.1 2.5 6.2-6.3"/></svg>
<div class="b" style="left:550px;top:507.5px;width:24px;height:24px;border-radius:50%;background:#3182ce"></div>
<div class="t" style="left:550px;top:514.5px;width:24px;text-align:center;font-size:9.6px;line-height:10px;color:#fff">C</div>
<div class="t" style="left:582.6px;top:505.15px;font-size:14px;line-height:14px;font-weight:400;color:#1a202c;">CANANGULTEKıN</div>
<div class="t" style="left:582.6px;top:521.84px;font-size:12px;line-height:12px;font-weight:400;color:#718096;">CANANGULTEKıN$</div>
<svg class="a" style="left:757px;top:513.5px;" width="12" height="12" viewBox="0 0 24 24" fill="none" stroke="#a0aec0" stroke-width="1.6" stroke-linecap="round" stroke-linejoin="round"><path d="M17 21v-2a4 4 0 0 0-4-4H5a4 4 0 0 0-4 4v2"/><circle cx="9" cy="7" r="4"/><path d="M23 21v-2a4 4 0 0 0-3-3.87"/><path d="M16 3.13a4 4 0 0 1 0 7.75"/></svg>
<div class="t" style="left:773px;top:512.95px;font-size:14px;line-height:14px;font-weight:400;color:#1a202c;">CANANGULTEKıN$</div>
<div class="b" style="left:955px;top:507.5px;width:24px;height:24px;border-radius:6px;background:#c6f6d5"></div>
<div class="t" style="left:962.5px;top:513.30px;font-size:13px;line-height:13px;font-weight:400;color:#2f855a;">C</div>
<div class="t" style="left:983.4px;top:512.95px;font-size:14px;line-height:14px;font-weight:400;color:#1a202c;">DALGIÇ KALIP BURSA</div>
<div class="b" style="left:1165px;top:507.0px;width:60px;height:25px;border:1px solid #90cdf4;border-radius:6px;background:#ebf8ff"></div>
<div class="t" style="left:1174.3px;top:513.84px;font-size:12px;line-height:12px;font-weight:400;color:#2c5282;">V1.0.52</div>
<div class="t" style="left:1291px;top:513.84px;font-size:12px;line-height:12px;font-weight:400;color:#a0aec0;">-</div>
<svg class="a" style="left:1414px;top:510.0px;" width="12" height="12" viewBox="0 0 24 24" fill="none" stroke="#38a169" stroke-width="2" stroke-linecap="round" stroke-linejoin="round"><rect x="4" y="4" width="16" height="16" rx="2"/><rect x="9" y="9" width="6" height="6"/><path d="M9 1v3M15 1v3M9 20v3M15 20v3M20 9h3M20 14h3M1 9h3M1 14h3"/></svg>
<div class="t" style="left:1430px;top:509.84px;font-size:12px;line-height:12px;font-weight:700;color:#2f855a;">3.0%</div>
<div class="b" style="left:1414px;top:528.0px;width:102.5px;height:4px;border-radius:2px;background:#edf2f7"></div><div class="b" style="left:1414px;top:528.0px;width:3.1px;height:4px;border-radius:2px;background:#38a169"></div>
<div class="t" style="left:1549px;top:509.84px;font-size:12px;line-height:12px;font-weight:700;color:#2f855a;">47%</div>
<div class="t" style="left:1575px;top:509.84px;width:100px;text-align:right;font-size:12px;line-height:12px;color:#718096">6.5GB</div>
<div class="b" style="left:1549px;top:528.0px;width:126.5px;height:4px;border-radius:2px;background:#edf2f7"></div><div class="b" style="left:1549px;top:528.0px;width:59.5px;height:4px;border-radius:2px;background:#38a169"></div>
<svg class="a" style="left:1708px;top:510.0px;" width="12" height="12" viewBox="0 0 24 24" fill="none" stroke="#38a169" stroke-width="2" stroke-linecap="round" stroke-linejoin="round"><path d="M22 12H2"/><path d="M5.45 5.11L2 12v6a2 2 0 0 0 2 2h16a2 2 0 0 0 2-2v-6l-3.45-6.89A2 2 0 0 0 16.76 4H7.24a2 2 0 0 0-1.79 1.11z"/><path d="M6 16h.01M10 16h.01"/></svg>
<div class="t" style="left:1724px;top:509.84px;font-size:12px;line-height:12px;font-weight:700;color:#2f855a;">42%</div>
<div class="t" style="left:1713px;top:509.84px;width:100px;text-align:right;font-size:12px;line-height:12px;color:#718096">201GB</div>
<div class="b" style="left:1708px;top:528.0px;width:105.5px;height:4px;border-radius:2px;background:#edf2f7"></div><div class="b" style="left:1708px;top:528.0px;width:44.3px;height:4px;border-radius:2px;background:#38a169"></div>
<div class="t" style="left:1846px;top:512.95px;font-size:14px;line-height:14px;font-weight:400;color:#1a202c;">Windows Defender</div>
<div class="b" style="left:292px;top:545px;width:1700px;height:49px;background:#fff;border-bottom:1px solid #edf2f7"></div>
<div class="b" style="left:308px;top:560.5px;width:16px;height:16px;border:2px solid #e2e8f0;border-radius:3px;background:#fff"></div>
<div class="b" style="left:356px;top:564.5px;width:8px;height:8px;border-radius:50%;background:#38a169"></div>
<div class="b" style="left:372px;top:556.5px;width:61px;height:24px;border-radius:6px;background:#c6f6d5"></div>
<div class="t" style="left:380px;top:562.84px;font-size:12px;line-height:12px;font-weight:400;color:#22543d;">ONLINE</div>
<svg class="a" style="left:471px;top:557.0px" width="24" height="24" viewBox="0 0 24 24"><path fill="#38a169" d="M23 12l-2.44-2.79.34-3.69-3.61-.82-1.89-3.2L12 2.96 8.6 1.5 6.71 4.69 3.1 5.5l.34 3.7L1 12l2.44 2.79-.34 3.7 3.61.82L8.6 22.5l3.4-1.47 3.4 1.46 1.89-3.19 3.61-.82-.34-3.69L23 12z"/><path fill="none" stroke="#fff" stroke-width="2.2" stroke-linecap="round" stroke-linejoin="round" d="M7.9 12.7l2.1 2.5 6.2-6.3"/></svg>
<div class="b" style="left:550px;top:556.5px;width:24px;height:24px;border-radius:50%;background:#3182ce"></div>
<div class="t" style="left:550px;top:563.5px;width:24px;text-align:center;font-size:9.6px;line-height:10px;color:#fff">B</div>
<div class="t" style="left:582.6px;top:554.15px;font-size:14px;line-height:14px;font-weight:400;color:#1a202c;">BURSA-PROSES</div>
<div class="t" style="left:582.6px;top:570.84px;font-size:12px;line-height:12px;font-weight:400;color:#718096;">BURSA-PROSES$</div>
<svg class="a" style="left:757px;top:562.5px;" width="12" height="12" viewBox="0 0 24 24" fill="none" stroke="#a0aec0" stroke-width="1.6" stroke-linecap="round" stroke-linejoin="round"><path d="M17 21v-2a4 4 0 0 0-4-4H5a4 4 0 0 0-4 4v2"/><circle cx="9" cy="7" r="4"/><path d="M23 21v-2a4 4 0 0 0-3-3.87"/><path d="M16 3.13a4 4 0 0 1 0 7.75"/></svg>
<div class="t" style="left:773px;top:561.95px;font-size:14px;line-height:14px;font-weight:400;color:#1a202c;">BURSA-PROSES$</div>
<div class="b" style="left:955px;top:556.5px;width:24px;height:24px;border-radius:6px;background:#c6f6d5"></div>
<div class="t" style="left:962.5px;top:562.30px;font-size:13px;line-height:13px;font-weight:400;color:#2f855a;">C</div>
<div class="t" style="left:983.4px;top:561.95px;font-size:14px;line-height:14px;font-weight:400;color:#1a202c;">DALGIÇ KALIP BURSA</div>
<div class="b" style="left:1165px;top:556.0px;width:60px;height:25px;border:1px solid #90cdf4;border-radius:6px;background:#ebf8ff"></div>
<div class="t" style="left:1174.3px;top:562.84px;font-size:12px;line-height:12px;font-weight:400;color:#2c5282;">V1.0.52</div>
<div class="t" style="left:1291px;top:562.84px;font-size:12px;line-height:12px;font-weight:400;color:#a0aec0;">-</div>
<svg class="a" style="left:1414px;top:559.0px;" width="12" height="12" viewBox="0 0 24 24" fill="none" stroke="#38a169" stroke-width="2" stroke-linecap="round" stroke-linejoin="round"><rect x="4" y="4" width="16" height="16" rx="2"/><rect x="9" y="9" width="6" height="6"/><path d="M9 1v3M15 1v3M9 20v3M15 20v3M20 9h3M20 14h3M1 9h3M1 14h3"/></svg>
<div class="t" style="left:1430px;top:558.84px;font-size:12px;line-height:12px;font-weight:700;color:#2f855a;">0.0%</div>
<div class="b" style="left:1414px;top:577.0px;width:102.5px;height:4px;border-radius:2px;background:#edf2f7"></div>
<div class="t" style="left:1549px;top:558.84px;font-size:12px;line-height:12px;font-weight:700;color:#2f855a;">58%</div>
<div class="t" style="left:1575px;top:558.84px;width:100px;text-align:right;font-size:12px;line-height:12px;color:#718096">4.6GB</div>
<div class="b" style="left:1549px;top:577.0px;width:126.5px;height:4px;border-radius:2px;background:#edf2f7"></div><div class="b" style="left:1549px;top:577.0px;width:73.4px;height:4px;border-radius:2px;background:#38a169"></div>
<svg class="a" style="left:1708px;top:559.0px;" width="12" height="12" viewBox="0 0 24 24" fill="none" stroke="#38a169" stroke-width="2" stroke-linecap="round" stroke-linejoin="round"><path d="M22 12H2"/><path d="M5.45 5.11L2 12v6a2 2 0 0 0 2 2h16a2 2 0 0 0 2-2v-6l-3.45-6.89A2 2 0 0 0 16.76 4H7.24a2 2 0 0 0-1.79 1.11z"/><path d="M6 16h.01M10 16h.01"/></svg>
<div class="t" style="left:1724px;top:558.84px;font-size:12px;line-height:12px;font-weight:700;color:#2f855a;">28%</div>
<div class="t" style="left:1713px;top:558.84px;width:100px;text-align:right;font-size:12px;line-height:12px;color:#718096">136GB</div>
<div class="b" style="left:1708px;top:577.0px;width:105.5px;height:4px;border-radius:2px;background:#edf2f7"></div><div class="b" style="left:1708px;top:577.0px;width:29.5px;height:4px;border-radius:2px;background:#38a169"></div>
<div class="t" style="left:1846px;top:561.95px;font-size:14px;line-height:14px;font-weight:400;color:#1a202c;">Windows Defender</div>
<div class="b" style="left:292px;top:594px;width:1700px;height:49px;background:#f7fafc;border-bottom:1px solid #edf2f7"></div>
<div class="b" style="left:308px;top:609.5px;width:16px;height:16px;border:2px solid #e2e8f0;border-radius:3px;background:#fff"></div>
<div class="b" style="left:356px;top:613.5px;width:8px;height:8px;border-radius:50%;background:#718096"></div>
<div class="b" style="left:372px;top:605.5px;width:67px;height:24px;border-radius:6px;background:#edf2f7"></div>
<div class="t" style="left:380px;top:611.84px;font-size:12px;line-height:12px;font-weight:400;color:#2d3748;">OFFLINE</div>
<svg class="a" style="left:471px;top:606.0px" width="24" height="24" viewBox="0 0 24 24"><path fill="#38a169" d="M23 12l-2.44-2.79.34-3.69-3.61-.82-1.89-3.2L12 2.96 8.6 1.5 6.71 4.69 3.1 5.5l.34 3.7L1 12l2.44 2.79-.34 3.7 3.61.82L8.6 22.5l3.4-1.47 3.4 1.46 1.89-3.19 3.61-.82-.34-3.69L23 12z"/><path fill="none" stroke="#fff" stroke-width="2.2" stroke-linecap="round" stroke-linejoin="round" d="M7.9 12.7l2.1 2.5 6.2-6.3"/></svg>
<div class="b" style="left:550px;top:605.5px;width:24px;height:24px;border-radius:50%;background:#3182ce"></div>
<div class="t" style="left:550px;top:612.5px;width:24px;text-align:center;font-size:9.6px;line-height:10px;color:#1a202c">U</div>
<div class="t" style="left:582.6px;top:603.15px;font-size:14px;line-height:14px;font-weight:400;color:#1a202c;">ULGENSEKMEN</div>
<div class="t" style="left:582.6px;top:619.84px;font-size:12px;line-height:12px;font-weight:400;color:#718096;">ULGENSEKMEN$</div>
<svg class="a" style="left:757px;top:611.5px;" width="12" height="12" viewBox="0 0 24 24" fill="none" stroke="#a0aec0" stroke-width="1.6" stroke-linecap="round" stroke-linejoin="round"><path d="M17 21v-2a4 4 0 0 0-4-4H5a4 4 0 0 0-4 4v2"/><circle cx="9" cy="7" r="4"/><path d="M23 21v-2a4 4 0 0 0-3-3.87"/><path d="M16 3.13a4 4 0 0 1 0 7.75"/></svg>
<div class="t" style="left:773px;top:610.95px;font-size:14px;line-height:14px;font-weight:400;color:#1a202c;">ULGENSEKMEN$</div>
<div class="b" style="left:955px;top:605.5px;width:24px;height:24px;border-radius:6px;background:#c6f6d5"></div>
<div class="t" style="left:962.5px;top:611.30px;font-size:13px;line-height:13px;font-weight:400;color:#2f855a;">C</div>
<div class="t" style="left:983.4px;top:610.95px;font-size:14px;line-height:14px;font-weight:400;color:#1a202c;">DALGIÇ KALIP BURSA</div>
<div class="b" style="left:1165px;top:605.0px;width:60px;height:25px;border:1px solid #90cdf4;border-radius:6px;background:#ebf8ff"></div>
<div class="t" style="left:1174.3px;top:611.84px;font-size:12px;line-height:12px;font-weight:400;color:#2c5282;">V1.0.52</div>
<div class="t" style="left:1291px;top:611.84px;font-size:12px;line-height:12px;font-weight:400;color:#a0aec0;">-</div>
<svg class="a" style="left:1414px;top:608.0px;" width="12" height="12" viewBox="0 0 24 24" fill="none" stroke="#38a169" stroke-width="2" stroke-linecap="round" stroke-linejoin="round"><rect x="4" y="4" width="16" height="16" rx="2"/><rect x="9" y="9" width="6" height="6"/><path d="M9 1v3M15 1v3M9 20v3M15 20v3M20 9h3M20 14h3M1 9h3M1 14h3"/></svg>
<div class="t" style="left:1430px;top:607.84px;font-size:12px;line-height:12px;font-weight:700;color:#2f855a;">46.0%</div>
<div class="b" style="left:1414px;top:626.0px;width:102.5px;height:4px;border-radius:2px;background:#edf2f7"></div><div class="b" style="left:1414px;top:626.0px;width:47.1px;height:4px;border-radius:2px;background:#38a169"></div>
<div class="t" style="left:1549px;top:607.84px;font-size:12px;line-height:12px;font-weight:700;color:#b7791f;">68%</div>
<div class="t" style="left:1575px;top:607.84px;width:100px;text-align:right;font-size:12px;line-height:12px;color:#718096">5.3GB</div>
<div class="b" style="left:1549px;top:626.0px;width:126.5px;height:4px;border-radius:2px;background:#edf2f7"></div><div class="b" style="left:1549px;top:626.0px;width:86.0px;height:4px;border-radius:2px;background:#d69e2e"></div>
<svg class="a" style="left:1708px;top:608.0px;" width="12" height="12" viewBox="0 0 24 24" fill="none" stroke="#38a169" stroke-width="2" stroke-linecap="round" stroke-linejoin="round"><path d="M22 12H2"/><path d="M5.45 5.11L2 12v6a2 2 0 0 0 2 2h16a2 2 0 0 0 2-2v-6l-3.45-6.89A2 2 0 0 0 16.76 4H7.24a2 2 0 0 0-1.79 1.11z"/><path d="M6 16h.01M10 16h.01"/></svg>
<div class="t" style="left:1724px;top:607.84px;font-size:12px;line-height:12px;font-weight:700;color:#2f855a;">16%</div>
<div class="t" style="left:1713px;top:607.84px;width:100px;text-align:right;font-size:12px;line-height:12px;color:#718096">75GB</div>
<div class="b" style="left:1708px;top:626.0px;width:105.5px;height:4px;border-radius:2px;background:#edf2f7"></div><div class="b" style="left:1708px;top:626.0px;width:16.9px;height:4px;border-radius:2px;background:#38a169"></div>
<div class="t" style="left:1846px;top:610.95px;font-size:14px;line-height:14px;font-weight:400;color:#1a202c;">Windows Defender</div>
<div class="b" style="left:292px;top:643px;width:1700px;height:49px;background:#fff;border-bottom:1px solid #edf2f7"></div>
<div class="b" style="left:308px;top:658.5px;width:16px;height:16px;border:2px solid #e2e8f0;border-radius:3px;background:#fff"></div>
<div class="b" style="left:356px;top:662.5px;width:8px;height:8px;border-radius:50%;background:#718096"></div>
<div class="b" style="left:372px;top:654.5px;width:67px;height:24px;border-radius:6px;background:#edf2f7"></div>
<div class="t" style="left:380px;top:660.84px;font-size:12px;line-height:12px;font-weight:400;color:#2d3748;">OFFLINE</div>
<svg class="a" style="left:471px;top:655.0px" width="24" height="24" viewBox="0 0 24 24"><path fill="#38a169" d="M23 12l-2.44-2.79.34-3.69-3.61-.82-1.89-3.2L12 2.96 8.6 1.5 6.71 4.69 3.1 5.5l.34 3.7L1 12l2.44 2.79-.34 3.7 3.61.82L8.6 22.5l3.4-1.47 3.4 1.46 1.89-3.19 3.61-.82-.34-3.69L23 12z"/><path fill="none" stroke="#fff" stroke-width="2.2" stroke-linecap="round" stroke-linejoin="round" d="M7.9 12.7l2.1 2.5 6.2-6.3"/></svg>
<div class="b" style="left:550px;top:654.5px;width:24px;height:24px;border-radius:50%;background:#3182ce"></div>
<div class="t" style="left:550px;top:661.5px;width:24px;text-align:center;font-size:9.6px;line-height:10px;color:#fff">A</div>
<div class="t" style="left:582.6px;top:652.15px;font-size:14px;line-height:14px;font-weight:400;color:#1a202c;">AHMETOZTOYGAR</div>
<div class="t" style="left:582.6px;top:668.84px;font-size:12px;line-height:12px;font-weight:400;color:#718096;">AHMETOZTOYGAR$</div>
<svg class="a" style="left:757px;top:660.5px;" width="12" height="12" viewBox="0 0 24 24" fill="none" stroke="#a0aec0" stroke-width="1.6" stroke-linecap="round" stroke-linejoin="round"><path d="M17 21v-2a4 4 0 0 0-4-4H5a4 4 0 0 0-4 4v2"/><circle cx="9" cy="7" r="4"/><path d="M23 21v-2a4 4 0 0 0-3-3.87"/><path d="M16 3.13a4 4 0 0 1 0 7.75"/></svg>
<div class="t" style="left:773px;top:659.95px;font-size:14px;line-height:14px;font-weight:400;color:#1a202c;">AHMETOZTOYGAR$</div>
<div class="b" style="left:955px;top:654.5px;width:24px;height:24px;border-radius:6px;background:#c6f6d5"></div>
<div class="t" style="left:962.5px;top:660.30px;font-size:13px;line-height:13px;font-weight:400;color:#2f855a;">C</div>
<div class="t" style="left:983.4px;top:659.95px;font-size:14px;line-height:14px;font-weight:400;color:#1a202c;">DALGIÇ KALIP BURSA</div>
<div class="b" style="left:1165px;top:654.0px;width:60px;height:25px;border:1px solid #90cdf4;border-radius:6px;background:#ebf8ff"></div>
<div class="t" style="left:1174.3px;top:660.84px;font-size:12px;line-height:12px;font-weight:400;color:#2c5282;">V1.0.52</div>
<div class="t" style="left:1291px;top:660.84px;font-size:12px;line-height:12px;font-weight:400;color:#a0aec0;">-</div>
<svg class="a" style="left:1414px;top:657.0px;" width="12" height="12" viewBox="0 0 24 24" fill="none" stroke="#e53e3e" stroke-width="2" stroke-linecap="round" stroke-linejoin="round"><rect x="4" y="4" width="16" height="16" rx="2"/><rect x="9" y="9" width="6" height="6"/><path d="M9 1v3M15 1v3M9 20v3M15 20v3M20 9h3M20 14h3M1 9h3M1 14h3"/></svg>
<div class="t" style="left:1430px;top:656.84px;font-size:12px;line-height:12px;font-weight:700;color:#c53030;">100.0%</div>
<div class="b" style="left:1414px;top:675.0px;width:102.5px;height:4px;border-radius:2px;background:#edf2f7"></div><div class="b" style="left:1414px;top:675.0px;width:102.5px;height:4px;border-radius:2px;background:#e53e3e"></div>
<div class="t" style="left:1549px;top:656.84px;font-size:12px;line-height:12px;font-weight:700;color:#c53030;">89%</div>
<div class="t" style="left:1575px;top:656.84px;width:100px;text-align:right;font-size:12px;line-height:12px;color:#718096">7.0GB</div>
<div class="b" style="left:1549px;top:675.0px;width:126.5px;height:4px;border-radius:2px;background:#edf2f7"></div><div class="b" style="left:1549px;top:675.0px;width:112.6px;height:4px;border-radius:2px;background:#e53e3e"></div>
<svg class="a" style="left:1708px;top:657.0px;" width="12" height="12" viewBox="0 0 24 24" fill="none" stroke="#e53e3e" stroke-width="2" stroke-linecap="round" stroke-linejoin="round"><path d="M22 12H2"/><path d="M5.45 5.11L2 12v6a2 2 0 0 0 2 2h16a2 2 0 0 0 2-2v-6l-3.45-6.89A2 2 0 0 0 16.76 4H7.24a2 2 0 0 0-1.79 1.11z"/><path d="M6 16h.01M10 16h.01"/></svg>
<div class="t" style="left:1724px;top:656.84px;font-size:12px;line-height:12px;font-weight:700;color:#c53030;">82%</div>
<div class="t" style="left:1713px;top:656.84px;width:100px;text-align:right;font-size:12px;line-height:12px;color:#718096">194GB</div>
<div class="b" style="left:1708px;top:675.0px;width:105.5px;height:4px;border-radius:2px;background:#edf2f7"></div><div class="b" style="left:1708px;top:675.0px;width:86.5px;height:4px;border-radius:2px;background:#e53e3e"></div>
<div class="t" style="left:1846px;top:659.95px;font-size:14px;line-height:14px;font-weight:400;color:#1a202c;">-</div>
<div class="b" style="left:292px;top:692px;width:1700px;height:49px;background:#f7fafc;border-bottom:1px solid #edf2f7"></div>
<div class="b" style="left:308px;top:707.5px;width:16px;height:16px;border:2px solid #e2e8f0;border-radius:3px;background:#fff"></div>
<div class="b" style="left:356px;top:711.5px;width:8px;height:8px;border-radius:50%;background:#718096"></div>
<div class="b" style="left:372px;top:703.5px;width:67px;height:24px;border-radius:6px;background:#edf2f7"></div>
<div class="t" style="left:380px;top:709.84px;font-size:12px;line-height:12px;font-weight:400;color:#2d3748;">OFFLINE</div>
<svg class="a" style="left:471px;top:704.0px" width="24" height="24" viewBox="0 0 24 24"><path fill="#38a169" d="M23 12l-2.44-2.79.34-3.69-3.61-.82-1.89-3.2L12 2.96 8.6 1.5 6.71 4.69 3.1 5.5l.34 3.7L1 12l2.44 2.79-.34 3.7 3.61.82L8.6 22.5l3.4-1.47 3.4 1.46 1.89-3.19 3.61-.82-.34-3.69L23 12z"/><path fill="none" stroke="#fff" stroke-width="2.2" stroke-linecap="round" stroke-linejoin="round" d="M7.9 12.7l2.1 2.5 6.2-6.3"/></svg>
<div class="b" style="left:550px;top:703.5px;width:24px;height:24px;border-radius:50%;background:#3182ce"></div>
<div class="t" style="left:550px;top:710.5px;width:24px;text-align:center;font-size:9.6px;line-height:10px;color:#fff">E</div>
<div class="t" style="left:582.6px;top:701.15px;font-size:14px;line-height:14px;font-weight:400;color:#1a202c;">ERGINSONMEZ</div>
<div class="t" style="left:582.6px;top:717.84px;font-size:12px;line-height:12px;font-weight:400;color:#718096;">ERGINSONMEZ$</div>
<svg class="a" style="left:757px;top:709.5px;" width="12" height="12" viewBox="0 0 24 24" fill="none" stroke="#a0aec0" stroke-width="1.6" stroke-linecap="round" stroke-linejoin="round"><path d="M17 21v-2a4 4 0 0 0-4-4H5a4 4 0 0 0-4 4v2"/><circle cx="9" cy="7" r="4"/><path d="M23 21v-2a4 4 0 0 0-3-3.87"/><path d="M16 3.13a4 4 0 0 1 0 7.75"/></svg>
<div class="t" style="left:773px;top:708.95px;font-size:14px;line-height:14px;font-weight:400;color:#1a202c;">ERGINSONMEZ$</div>
<div class="b" style="left:955px;top:703.5px;width:24px;height:24px;border-radius:6px;background:#c6f6d5"></div>
<div class="t" style="left:962.5px;top:709.30px;font-size:13px;line-height:13px;font-weight:400;color:#2f855a;">C</div>
<div class="t" style="left:983.4px;top:708.95px;font-size:14px;line-height:14px;font-weight:400;color:#1a202c;">DALGIÇ KALIP BURSA</div>
<div class="b" style="left:1165px;top:703.0px;width:60px;height:25px;border:1px solid #90cdf4;border-radius:6px;background:#ebf8ff"></div>
<div class="t" style="left:1174.3px;top:709.84px;font-size:12px;line-height:12px;font-weight:400;color:#2c5282;">V1.0.52</div>
<div class="t" style="left:1291px;top:709.84px;font-size:12px;line-height:12px;font-weight:400;color:#a0aec0;">-</div>
<svg class="a" style="left:1414px;top:706.0px;" width="12" height="12" viewBox="0 0 24 24" fill="none" stroke="#38a169" stroke-width="2" stroke-linecap="round" stroke-linejoin="round"><rect x="4" y="4" width="16" height="16" rx="2"/><rect x="9" y="9" width="6" height="6"/><path d="M9 1v3M15 1v3M9 20v3M15 20v3M20 9h3M20 14h3M1 9h3M1 14h3"/></svg>
<div class="t" style="left:1430px;top:705.84px;font-size:12px;line-height:12px;font-weight:700;color:#2f855a;">4.0%</div>
<div class="b" style="left:1414px;top:724.0px;width:102.5px;height:4px;border-radius:2px;background:#edf2f7"></div><div class="b" style="left:1414px;top:724.0px;width:4.1px;height:4px;border-radius:2px;background:#38a169"></div>
<div class="t" style="left:1549px;top:705.84px;font-size:12px;line-height:12px;font-weight:700;color:#b7791f;">72%</div>
<div class="t" style="left:1575px;top:705.84px;width:100px;text-align:right;font-size:12px;line-height:12px;color:#718096">10.0GB</div>
<div class="b" style="left:1549px;top:724.0px;width:126.5px;height:4px;border-radius:2px;background:#edf2f7"></div><div class="b" style="left:1549px;top:724.0px;width:91.1px;height:4px;border-radius:2px;background:#d69e2e"></div>
<svg class="a" style="left:1708px;top:706.0px;" width="12" height="12" viewBox="0 0 24 24" fill="none" stroke="#38a169" stroke-width="2" stroke-linecap="round" stroke-linejoin="round"><path d="M22 12H2"/><path d="M5.45 5.11L2 12v6a2 2 0 0 0 2 2h16a2 2 0 0 0 2-2v-6l-3.45-6.89A2 2 0 0 0 16.76 4H7.24a2 2 0 0 0-1.79 1.11z"/><path d="M6 16h.01M10 16h.01"/></svg>
<div class="t" style="left:1724px;top:705.84px;font-size:12px;line-height:12px;font-weight:700;color:#2f855a;">29%</div>
<div class="t" style="left:1713px;top:705.84px;width:100px;text-align:right;font-size:12px;line-height:12px;color:#718096">137GB</div>
<div class="b" style="left:1708px;top:724.0px;width:105.5px;height:4px;border-radius:2px;background:#edf2f7"></div><div class="b" style="left:1708px;top:724.0px;width:30.6px;height:4px;border-radius:2px;background:#38a169"></div>
<div class="t" style="left:1846px;top:708.95px;font-size:14px;line-height:14px;font-weight:400;color:#1a202c;">Windows Defender</div>
<div class="b" style="left:292px;top:741px;width:1700px;height:49px;background:#fff;border-bottom:1px solid #edf2f7"></div>
<div class="b" style="left:308px;top:756.5px;width:16px;height:16px;border:2px solid #e2e8f0;border-radius:3px;background:#fff"></div>
<div class="b" style="left:356px;top:760.5px;width:8px;height:8px;border-radius:50%;background:#718096"></div>
<div class="b" style="left:372px;top:752.5px;width:67px;height:24px;border-radius:6px;background:#edf2f7"></div>
<div class="t" style="left:380px;top:758.84px;font-size:12px;line-height:12px;font-weight:400;color:#2d3748;">OFFLINE</div>
<svg class="a" style="left:471px;top:753.0px" width="24" height="24" viewBox="0 0 24 24"><path fill="#38a169" d="M23 12l-2.44-2.79.34-3.69-3.61-.82-1.89-3.2L12 2.96 8.6 1.5 6.71 4.69 3.1 5.5l.34 3.7L1 12l2.44 2.79-.34 3.7 3.61.82L8.6 22.5l3.4-1.47 3.4 1.46 1.89-3.19 3.61-.82-.34-3.69L23 12z"/><path fill="none" stroke="#fff" stroke-width="2.2" stroke-linecap="round" stroke-linejoin="round" d="M7.9 12.7l2.1 2.5 6.2-6.3"/></svg>
<div class="b" style="left:550px;top:752.5px;width:24px;height:24px;border-radius:50%;background:#3182ce"></div>
<div class="t" style="left:550px;top:759.5px;width:24px;text-align:center;font-size:9.6px;line-height:10px;color:#fff">Z</div>
<div class="t" style="left:582.6px;top:750.15px;font-size:14px;line-height:14px;font-weight:400;color:#1a202c;">ZEKIISIK</div>
<div class="t" style="left:582.6px;top:766.84px;font-size:12px;line-height:12px;font-weight:400;color:#718096;">ZEKIISIK$</div>
<svg class="a" style="left:757px;top:758.5px;" width="12" height="12" viewBox="0 0 24 24" fill="none" stroke="#a0aec0" stroke-width="1.6" stroke-linecap="round" stroke-linejoin="round"><path d="M17 21v-2a4 4 0 0 0-4-4H5a4 4 0 0 0-4 4v2"/><circle cx="9" cy="7" r="4"/><path d="M23 21v-2a4 4 0 0 0-3-3.87"/><path d="M16 3.13a4 4 0 0 1 0 7.75"/></svg>
<div class="t" style="left:773px;top:757.95px;font-size:14px;line-height:14px;font-weight:400;color:#1a202c;">ZEKIISIK$</div>
<div class="b" style="left:955px;top:752.5px;width:24px;height:24px;border-radius:6px;background:#c6f6d5"></div>
<div class="t" style="left:962.5px;top:758.30px;font-size:13px;line-height:13px;font-weight:400;color:#2f855a;">C</div>
<div class="t" style="left:983.4px;top:757.95px;font-size:14px;line-height:14px;font-weight:400;color:#1a202c;">DALGIÇ KALIP BURSA</div>
<div class="b" style="left:1165px;top:752.0px;width:60px;height:25px;border:1px solid #90cdf4;border-radius:6px;background:#ebf8ff"></div>
<div class="t" style="left:1174.3px;top:758.84px;font-size:12px;line-height:12px;font-weight:400;color:#2c5282;">V1.0.52</div>
<div class="t" style="left:1291px;top:758.84px;font-size:12px;line-height:12px;font-weight:400;color:#a0aec0;">-</div>
<svg class="a" style="left:1414px;top:755.0px;" width="12" height="12" viewBox="0 0 24 24" fill="none" stroke="#38a169" stroke-width="2" stroke-linecap="round" stroke-linejoin="round"><rect x="4" y="4" width="16" height="16" rx="2"/><rect x="9" y="9" width="6" height="6"/><path d="M9 1v3M15 1v3M9 20v3M15 20v3M20 9h3M20 14h3M1 9h3M1 14h3"/></svg>
<div class="t" style="left:1430px;top:754.84px;font-size:12px;line-height:12px;font-weight:700;color:#2f855a;">6.0%</div>
<div class="b" style="left:1414px;top:773.0px;width:102.5px;height:4px;border-radius:2px;background:#edf2f7"></div><div class="b" style="left:1414px;top:773.0px;width:6.2px;height:4px;border-radius:2px;background:#38a169"></div>
<div class="t" style="left:1549px;top:754.84px;font-size:12px;line-height:12px;font-weight:700;color:#2f855a;">41%</div>
<div class="t" style="left:1575px;top:754.84px;width:100px;text-align:right;font-size:12px;line-height:12px;color:#718096">6.5GB</div>
<div class="b" style="left:1549px;top:773.0px;width:126.5px;height:4px;border-radius:2px;background:#edf2f7"></div><div class="b" style="left:1549px;top:773.0px;width:51.9px;height:4px;border-radius:2px;background:#38a169"></div>
<svg class="a" style="left:1708px;top:755.0px;" width="12" height="12" viewBox="0 0 24 24" fill="none" stroke="#d69e2e" stroke-width="2" stroke-linecap="round" stroke-linejoin="round"><path d="M22 12H2"/><path d="M5.45 5.11L2 12v6a2 2 0 0 0 2 2h16a2 2 0 0 0 2-2v-6l-3.45-6.89A2 2 0 0 0 16.76 4H7.24a2 2 0 0 0-1.79 1.11z"/><path d="M6 16h.01M10 16h.01"/></svg>
<div class="t" style="left:1724px;top:754.84px;font-size:12px;line-height:12px;font-weight:700;color:#b7791f;">74%</div>
<div class="t" style="left:1713px;top:754.84px;width:100px;text-align:right;font-size:12px;line-height:12px;color:#718096">176GB</div>
<div class="b" style="left:1708px;top:773.0px;width:105.5px;height:4px;border-radius:2px;background:#edf2f7"></div><div class="b" style="left:1708px;top:773.0px;width:78.1px;height:4px;border-radius:2px;background:#d69e2e"></div>
<div class="t" style="left:1846px;top:757.95px;font-size:14px;line-height:14px;font-weight:400;color:#1a202c;">Windows Defender</div>
<div class="b" style="left:292px;top:790px;width:1700px;height:49px;background:#f7fafc;border-bottom:1px solid #edf2f7"></div>
<div class="b" style="left:308px;top:805.5px;width:16px;height:16px;border:2px solid #e2e8f0;border-radius:3px;background:#fff"></div>
<div class="b" style="left:356px;top:809.5px;width:8px;height:8px;border-radius:50%;background:#38a169"></div>
<div class="b" style="left:372px;top:801.5px;width:61px;height:24px;border-radius:6px;background:#c6f6d5"></div>
<div class="t" style="left:380px;top:807.84px;font-size:12px;line-height:12px;font-weight:400;color:#22543d;">ONLINE</div>
<svg class="a" style="left:471px;top:802.0px" width="24" height="24" viewBox="0 0 24 24"><path fill="#38a169" d="M23 12l-2.44-2.79.34-3.69-3.61-.82-1.89-3.2L12 2.96 8.6 1.5 6.71 4.69 3.1 5.5l.34 3.7L1 12l2.44 2.79-.34 3.7 3.61.82L8.6 22.5l3.4-1.47 3.4 1.46 1.89-3.19 3.61-.82-.34-3.69L23 12z"/><path fill="none" stroke="#fff" stroke-width="2.2" stroke-linecap="round" stroke-linejoin="round" d="M7.9 12.7l2.1 2.5 6.2-6.3"/></svg>
<div class="b" style="left:550px;top:801.5px;width:24px;height:24px;border-radius:50%;background:#3182ce"></div>
<div class="t" style="left:550px;top:808.5px;width:24px;text-align:center;font-size:9.6px;line-height:10px;color:#1a202c">M</div>
<div class="t" style="left:582.6px;top:799.15px;font-size:14px;line-height:14px;font-weight:400;color:#1a202c;">MUSTAFAGOKCE</div>
<div class="t" style="left:582.6px;top:815.84px;font-size:12px;line-height:12px;font-weight:400;color:#718096;">MUSTAFAGOKCE$</div>
<svg class="a" style="left:757px;top:807.5px;" width="12" height="12" viewBox="0 0 24 24" fill="none" stroke="#a0aec0" stroke-width="1.6" stroke-linecap="round" stroke-linejoin="round"><path d="M17 21v-2a4 4 0 0 0-4-4H5a4 4 0 0 0-4 4v2"/><circle cx="9" cy="7" r="4"/><path d="M23 21v-2a4 4 0 0 0-3-3.87"/><path d="M16 3.13a4 4 0 0 1 0 7.75"/></svg>
<div class="t" style="left:773px;top:806.95px;font-size:14px;line-height:14px;font-weight:400;color:#1a202c;">MUSTAFAGOKCE$</div>
<div class="b" style="left:955px;top:801.5px;width:24px;height:24px;border-radius:6px;background:#c6f6d5"></div>
<div class="t" style="left:962.5px;top:807.30px;font-size:13px;line-height:13px;font-weight:400;color:#2f855a;">C</div>
<div class="t" style="left:983.4px;top:806.95px;font-size:14px;line-height:14px;font-weight:400;color:#1a202c;">DALGIÇ KALIP BURSA</div>
<div class="b" style="left:1165px;top:801.0px;width:60px;height:25px;border:1px solid #90cdf4;border-radius:6px;background:#ebf8ff"></div>
<div class="t" style="left:1174.3px;top:807.84px;font-size:12px;line-height:12px;font-weight:400;color:#2c5282;">V1.0.52</div>
<div class="t" style="left:1291px;top:807.84px;font-size:12px;line-height:12px;font-weight:400;color:#a0aec0;">-</div>
<svg class="a" style="left:1414px;top:804.0px;" width="12" height="12" viewBox="0 0 24 24" fill="none" stroke="#38a169" stroke-width="2" stroke-linecap="round" stroke-linejoin="round"><rect x="4" y="4" width="16" height="16" rx="2"/><rect x="9" y="9" width="6" height="6"/><path d="M9 1v3M15 1v3M9 20v3M15 20v3M20 9h3M20 14h3M1 9h3M1 14h3"/></svg>
<div class="t" style="left:1430px;top:803.84px;font-size:12px;line-height:12px;font-weight:700;color:#2f855a;">0.0%</div>
<div class="b" style="left:1414px;top:822.0px;width:102.5px;height:4px;border-radius:2px;background:#edf2f7"></div>
<div class="t" style="left:1549px;top:803.84px;font-size:12px;line-height:12px;font-weight:700;color:#b7791f;">68%</div>
<div class="t" style="left:1575px;top:803.84px;width:100px;text-align:right;font-size:12px;line-height:12px;color:#718096">5.4GB</div>
<div class="b" style="left:1549px;top:822.0px;width:126.5px;height:4px;border-radius:2px;background:#edf2f7"></div><div class="b" style="left:1549px;top:822.0px;width:86.0px;height:4px;border-radius:2px;background:#d69e2e"></div>
<svg class="a" style="left:1708px;top:804.0px;" width="12" height="12" viewBox="0 0 24 24" fill="none" stroke="#e53e3e" stroke-width="2" stroke-linecap="round" stroke-linejoin="round"><path d="M22 12H2"/><path d="M5.45 5.11L2 12v6a2 2 0 0 0 2 2h16a2 2 0 0 0 2-2v-6l-3.45-6.89A2 2 0 0 0 16.76 4H7.24a2 2 0 0 0-1.79 1.11z"/><path d="M6 16h.01M10 16h.01"/></svg>
<div class="t" style="left:1724px;top:803.84px;font-size:12px;line-height:12px;font-weight:700;color:#c53030;">84%</div>
<div class="t" style="left:1713px;top:803.84px;width:100px;text-align:right;font-size:12px;line-height:12px;color:#718096">186GB</div>
<div class="b" style="left:1708px;top:822.0px;width:105.5px;height:4px;border-radius:2px;background:#edf2f7"></div><div class="b" style="left:1708px;top:822.0px;width:88.6px;height:4px;border-radius:2px;background:#e53e3e"></div>
<div class="t" style="left:1846px;top:806.95px;font-size:14px;line-height:14px;font-weight:400;color:#1a202c;">-</div>
<div class="b" style="left:292px;top:839px;width:1700px;height:49px;background:#fff;border-bottom:1px solid #edf2f7"></div>
<div class="b" style="left:308px;top:854.5px;width:16px;height:16px;border:2px solid #e2e8f0;border-radius:3px;background:#fff"></div>
<div class="b" style="left:356px;top:858.5px;width:8px;height:8px;border-radius:50%;background:#38a169"></div>
<div class="b" style="left:372px;top:850.5px;width:61px;height:24px;border-radius:6px;background:#c6f6d5"></div>
<div class="t" style="left:380px;top:856.84px;font-size:12px;line-height:12px;font-weight:400;color:#22543d;">ONLINE</div>
<svg class="a" style="left:471px;top:851.0px" width="24" height="24" viewBox="0 0 24 24"><path fill="#38a169" d="M23 12l-2.44-2.79.34-3.69-3.61-.82-1.89-3.2L12 2.96 8.6 1.5 6.71 4.69 3.1 5.5l.34 3.7L1 12l2.44 2.79-.34 3.7 3.61.82L8.6 22.5l3.4-1.47 3.4 1.46 1.89-3.19 3.61-.82-.34-3.69L23 12z"/><path fill="none" stroke="#fff" stroke-width="2.2" stroke-linecap="round" stroke-linejoin="round" d="M7.9 12.7l2.1 2.5 6.2-6.3"/></svg>
<div class="b" style="left:550px;top:850.5px;width:24px;height:24px;border-radius:50%;background:#3182ce"></div>
<div class="t" style="left:550px;top:857.5px;width:24px;text-align:center;font-size:9.6px;line-height:10px;color:#1a202c">U</div>
<div class="t" style="left:582.6px;top:848.15px;font-size:14px;line-height:14px;font-weight:400;color:#1a202c;">UMITGULEC</div>
<div class="t" style="left:582.6px;top:864.84px;font-size:12px;line-height:12px;font-weight:400;color:#718096;">UMITGULEC$</div>
<svg class="a" style="left:757px;top:856.5px;" width="12" height="12" viewBox="0 0 24 24" fill="none" stroke="#a0aec0" stroke-width="1.6" stroke-linecap="round" stroke-linejoin="round"><path d="M17 21v-2a4 4 0 0 0-4-4H5a4 4 0 0 0-4 4v2"/><circle cx="9" cy="7" r="4"/><path d="M23 21v-2a4 4 0 0 0-3-3.87"/><path d="M16 3.13a4 4 0 0 1 0 7.75"/></svg>
<div class="t" style="left:773px;top:855.95px;font-size:14px;line-height:14px;font-weight:400;color:#1a202c;">UMITGULEC$</div>
<div class="b" style="left:955px;top:850.5px;width:24px;height:24px;border-radius:6px;background:#c6f6d5"></div>
<div class="t" style="left:962.5px;top:856.30px;font-size:13px;line-height:13px;font-weight:400;color:#2f855a;">C</div>
<div class="t" style="left:983.4px;top:855.95px;font-size:14px;line-height:14px;font-weight:400;color:#1a202c;">DALGIÇ KALIP BURSA</div>
<div class="b" style="left:1165px;top:850.0px;width:60px;height:25px;border:1px solid #90cdf4;border-radius:6px;background:#ebf8ff"></div>
<div class="t" style="left:1174.3px;top:856.84px;font-size:12px;line-height:12px;font-weight:400;color:#2c5282;">V1.0.52</div>
<div class="t" style="left:1291px;top:856.84px;font-size:12px;line-height:12px;font-weight:400;color:#a0aec0;">-</div>
<svg class="a" style="left:1414px;top:853.0px;" width="12" height="12" viewBox="0 0 24 24" fill="none" stroke="#38a169" stroke-width="2" stroke-linecap="round" stroke-linejoin="round"><rect x="4" y="4" width="16" height="16" rx="2"/><rect x="9" y="9" width="6" height="6"/><path d="M9 1v3M15 1v3M9 20v3M15 20v3M20 9h3M20 14h3M1 9h3M1 14h3"/></svg>
<div class="t" style="left:1430px;top:852.84px;font-size:12px;line-height:12px;font-weight:700;color:#2f855a;">9.0%</div>
<div class="b" style="left:1414px;top:871.0px;width:102.5px;height:4px;border-radius:2px;background:#edf2f7"></div><div class="b" style="left:1414px;top:871.0px;width:9.2px;height:4px;border-radius:2px;background:#38a169"></div>
<div class="t" style="left:1549px;top:852.84px;font-size:12px;line-height:12px;font-weight:700;color:#b7791f;">66%</div>
<div class="t" style="left:1575px;top:852.84px;width:100px;text-align:right;font-size:12px;line-height:12px;color:#718096">5.1GB</div>
<div class="b" style="left:1549px;top:871.0px;width:126.5px;height:4px;border-radius:2px;background:#edf2f7"></div><div class="b" style="left:1549px;top:871.0px;width:83.5px;height:4px;border-radius:2px;background:#d69e2e"></div>
<svg class="a" style="left:1708px;top:853.0px;" width="12" height="12" viewBox="0 0 24 24" fill="none" stroke="#e53e3e" stroke-width="2" stroke-linecap="round" stroke-linejoin="round"><path d="M22 12H2"/><path d="M5.45 5.11L2 12v6a2 2 0 0 0 2 2h16a2 2 0 0 0 2-2v-6l-3.45-6.89A2 2 0 0 0 16.76 4H7.24a2 2 0 0 0-1.79 1.11z"/><path d="M6 16h.01M10 16h.01"/></svg>
<div class="t" style="left:1724px;top:852.84px;font-size:12px;line-height:12px;font-weight:700;color:#c53030;">92%</div>
<div class="t" style="left:1713px;top:852.84px;width:100px;text-align:right;font-size:12px;line-height:12px;color:#718096">217GB</div>
<div class="b" style="left:1708px;top:871.0px;width:105.5px;height:4px;border-radius:2px;background:#edf2f7"></div><div class="b" style="left:1708px;top:871.0px;width:97.1px;height:4px;border-radius:2px;background:#e53e3e"></div>
<div class="t" style="left:1846px;top:855.95px;font-size:14px;line-height:14px;font-weight:400;color:#1a202c;">Windows Defender</div>
<div class="b" style="left:292px;top:888px;width:1700px;height:49px;background:#f7fafc;border-bottom:1px solid #edf2f7"></div>
<div class="b" style="left:308px;top:903.5px;width:16px;height:16px;border:2px solid #e2e8f0;border-radius:3px;background:#fff"></div>
<div class="b" style="left:356px;top:907.5px;width:8px;height:8px;border-radius:50%;background:#718096"></div>
<div class="b" style="left:372px;top:899.5px;width:67px;height:24px;border-radius:6px;background:#edf2f7"></div>
<div class="t" style="left:380px;top:905.84px;font-size:12px;line-height:12px;font-weight:400;color:#2d3748;">OFFLINE</div>
<svg class="a" style="left:471px;top:900.0px" width="24" height="24" viewBox="0 0 24 24"><path fill="#38a169" d="M23 12l-2.44-2.79.34-3.69-3.61-.82-1.89-3.2L12 2.96 8.6 1.5 6.71 4.69 3.1 5.5l.34 3.7L1 12l2.44 2.79-.34 3.7 3.61.82L8.6 22.5l3.4-1.47 3.4 1.46 1.89-3.19 3.61-.82-.34-3.69L23 12z"/><path fill="none" stroke="#fff" stroke-width="2.2" stroke-linecap="round" stroke-linejoin="round" d="M7.9 12.7l2.1 2.5 6.2-6.3"/></svg>
<div class="b" style="left:550px;top:899.5px;width:24px;height:24px;border-radius:50%;background:#3182ce"></div>
<div class="t" style="left:550px;top:906.5px;width:24px;text-align:center;font-size:9.6px;line-height:10px;color:#1a202c">E</div>
<div class="t" style="left:582.6px;top:897.15px;font-size:14px;line-height:14px;font-weight:400;color:#1a202c;">EMREMERT</div>
<div class="t" style="left:582.6px;top:913.84px;font-size:12px;line-height:12px;font-weight:400;color:#718096;">EMREMERT$</div>
<svg class="a" style="left:757px;top:905.5px;" width="12" height="12" viewBox="0 0 24 24" fill="none" stroke="#a0aec0" stroke-width="1.6" stroke-linecap="round" stroke-linejoin="round"><path d="M17 21v-2a4 4 0 0 0-4-4H5a4 4 0 0 0-4 4v2"/><circle cx="9" cy="7" r="4"/><path d="M23 21v-2a4 4 0 0 0-3-3.87"/><path d="M16 3.13a4 4 0 0 1 0 7.75"/></svg>
<div class="t" style="left:773px;top:904.95px;font-size:14px;line-height:14px;font-weight:400;color:#1a202c;">EMREMERT$</div>
<div class="b" style="left:955px;top:899.5px;width:24px;height:24px;border-radius:6px;background:#c6f6d5"></div>
<div class="t" style="left:962.5px;top:905.30px;font-size:13px;line-height:13px;font-weight:400;color:#2f855a;">C</div>
<div class="t" style="left:983.4px;top:904.95px;font-size:14px;line-height:14px;font-weight:400;color:#1a202c;">DALGIÇ KALIP BURSA</div>
<div class="b" style="left:1165px;top:899.0px;width:60px;height:25px;border:1px solid #90cdf4;border-radius:6px;background:#ebf8ff"></div>
<div class="t" style="left:1174.3px;top:905.84px;font-size:12px;line-height:12px;font-weight:400;color:#2c5282;">V1.0.52</div>
<div class="t" style="left:1291px;top:905.84px;font-size:12px;line-height:12px;font-weight:400;color:#a0aec0;">-</div>
<svg class="a" style="left:1414px;top:902.0px;" width="12" height="12" viewBox="0 0 24 24" fill="none" stroke="#38a169" stroke-width="2" stroke-linecap="round" stroke-linejoin="round"><rect x="4" y="4" width="16" height="16" rx="2"/><rect x="9" y="9" width="6" height="6"/><path d="M9 1v3M15 1v3M9 20v3M15 20v3M20 9h3M20 14h3M1 9h3M1 14h3"/></svg>
<div class="t" style="left:1430px;top:901.84px;font-size:12px;line-height:12px;font-weight:700;color:#2f855a;">49.0%</div>
<div class="b" style="left:1414px;top:920.0px;width:102.5px;height:4px;border-radius:2px;background:#edf2f7"></div><div class="b" style="left:1414px;top:920.0px;width:50.2px;height:4px;border-radius:2px;background:#38a169"></div>
<div class="t" style="left:1549px;top:901.84px;font-size:12px;line-height:12px;font-weight:700;color:#c53030;">94%</div>
<div class="t" style="left:1575px;top:901.84px;width:100px;text-align:right;font-size:12px;line-height:12px;color:#718096">7.4GB</div>
<div class="b" style="left:1549px;top:920.0px;width:126.5px;height:4px;border-radius:2px;background:#edf2f7"></div><div class="b" style="left:1549px;top:920.0px;width:118.9px;height:4px;border-radius:2px;background:#e53e3e"></div>
<svg class="a" style="left:1708px;top:902.0px;" width="12" height="12" viewBox="0 0 24 24" fill="none" stroke="#d69e2e" stroke-width="2" stroke-linecap="round" stroke-linejoin="round"><path d="M22 12H2"/><path d="M5.45 5.11L2 12v6a2 2 0 0 0 2 2h16a2 2 0 0 0 2-2v-6l-3.45-6.89A2 2 0 0 0 16.76 4H7.24a2 2 0 0 0-1.79 1.11z"/><path d="M6 16h.01M10 16h.01"/></svg>
<div class="t" style="left:1724px;top:901.84px;font-size:12px;line-height:12px;font-weight:700;color:#b7791f;">78%</div>
<div class="t" style="left:1713px;top:901.84px;width:100px;text-align:right;font-size:12px;line-height:12px;color:#718096">185GB</div>
<div class="b" style="left:1708px;top:920.0px;width:105.5px;height:4px;border-radius:2px;background:#edf2f7"></div><div class="b" style="left:1708px;top:920.0px;width:82.3px;height:4px;border-radius:2px;background:#d69e2e"></div>
<div class="t" style="left:1846px;top:904.95px;font-size:14px;line-height:14px;font-weight:400;color:#1a202c;">Windows Defender</div>
<div class="b" style="left:292px;top:937px;width:1700px;height:49px;background:#fff;border-bottom:1px solid #edf2f7"></div>
<div class="b" style="left:308px;top:952.5px;width:16px;height:16px;border:2px solid #e2e8f0;border-radius:3px;background:#fff"></div>
<div class="b" style="left:356px;top:956.5px;width:8px;height:8px;border-radius:50%;background:#718096"></div>
<div class="b" style="left:372px;top:948.5px;width:67px;height:24px;border-radius:6px;background:#edf2f7"></div>
<div class="t" style="left:380px;top:954.84px;font-size:12px;line-height:12px;font-weight:400;color:#2d3748;">OFFLINE</div>
<svg class="a" style="left:471px;top:949.0px" width="24" height="24" viewBox="0 0 24 24"><path fill="#38a169" d="M23 12l-2.44-2.79.34-3.69-3.61-.82-1.89-3.2L12 2.96 8.6 1.5 6.71 4.69 3.1 5.5l.34 3.7L1 12l2.44 2.79-.34 3.7 3.61.82L8.6 22.5l3.4-1.47 3.4 1.46 1.89-3.19 3.61-.82-.34-3.69L23 12z"/><path fill="none" stroke="#fff" stroke-width="2.2" stroke-linecap="round" stroke-linejoin="round" d="M7.9 12.7l2.1 2.5 6.2-6.3"/></svg>
<div class="b" style="left:550px;top:948.5px;width:24px;height:24px;border-radius:50%;background:#3182ce"></div>
<div class="t" style="left:550px;top:955.5px;width:24px;text-align:center;font-size:9.6px;line-height:10px;color:#1a202c">G</div>
<div class="t" style="left:582.6px;top:946.15px;font-size:14px;line-height:14px;font-weight:400;color:#1a202c;">GOKHANGULTEKIN</div>
<div class="t" style="left:582.6px;top:962.84px;font-size:12px;line-height:12px;font-weight:400;color:#718096;">GOKHANGULTEKIN$</div>
<svg class="a" style="left:757px;top:954.5px;" width="12" height="12" viewBox="0 0 24 24" fill="none" stroke="#a0aec0" stroke-width="1.6" stroke-linecap="round" stroke-linejoin="round"><path d="M17 21v-2a4 4 0 0 0-4-4H5a4 4 0 0 0-4 4v2"/><circle cx="9" cy="7" r="4"/><path d="M23 21v-2a4 4 0 0 0-3-3.87"/><path d="M16 3.13a4 4 0 0 1 0 7.75"/></svg>
<div class="t" style="left:773px;top:953.95px;font-size:14px;line-height:14px;font-weight:400;color:#1a202c;">GOKHANGULTEKIN$</div>
<div class="b" style="left:955px;top:948.5px;width:24px;height:24px;border-radius:6px;background:#c6f6d5"></div>
<div class="t" style="left:962.5px;top:954.30px;font-size:13px;line-height:13px;font-weight:400;color:#2f855a;">C</div>
<div class="t" style="left:983.4px;top:953.95px;font-size:14px;line-height:14px;font-weight:400;color:#1a202c;">DALGIÇ KALIP BURSA</div>
<div class="b" style="left:1165px;top:948.0px;width:60px;height:25px;border:1px solid #90cdf4;border-radius:6px;background:#ebf8ff"></div>
<div class="t" style="left:1174.3px;top:954.84px;font-size:12px;line-height:12px;font-weight:400;color:#2c5282;">V1.0.52</div>
<div class="t" style="left:1291px;top:954.84px;font-size:12px;line-height:12px;font-weight:400;color:#a0aec0;">-</div>
<svg class="a" style="left:1414px;top:951.0px;" width="12" height="12" viewBox="0 0 24 24" fill="none" stroke="#38a169" stroke-width="2" stroke-linecap="round" stroke-linejoin="round"><rect x="4" y="4" width="16" height="16" rx="2"/><rect x="9" y="9" width="6" height="6"/><path d="M9 1v3M15 1v3M9 20v3M15 20v3M20 9h3M20 14h3M1 9h3M1 14h3"/></svg>
<div class="t" style="left:1430px;top:950.84px;font-size:12px;line-height:12px;font-weight:700;color:#2f855a;">22.0%</div>
<div class="b" style="left:1414px;top:969.0px;width:102.5px;height:4px;border-radius:2px;background:#edf2f7"></div><div class="b" style="left:1414px;top:969.0px;width:22.6px;height:4px;border-radius:2px;background:#38a169"></div>
<div class="t" style="left:1549px;top:950.84px;font-size:12px;line-height:12px;font-weight:700;color:#c53030;">86%</div>
<div class="t" style="left:1575px;top:950.84px;width:100px;text-align:right;font-size:12px;line-height:12px;color:#718096">6.7GB</div>
<div class="b" style="left:1549px;top:969.0px;width:126.5px;height:4px;border-radius:2px;background:#edf2f7"></div><div class="b" style="left:1549px;top:969.0px;width:108.8px;height:4px;border-radius:2px;background:#e53e3e"></div>
<svg class="a" style="left:1708px;top:951.0px;" width="12" height="12" viewBox="0 0 24 24" fill="none" stroke="#e53e3e" stroke-width="2" stroke-linecap="round" stroke-linejoin="round"><path d="M22 12H2"/><path d="M5.45 5.11L2 12v6a2 2 0 0 0 2 2h16a2 2 0 0 0 2-2v-6l-3.45-6.89A2 2 0 0 0 16.76 4H7.24a2 2 0 0 0-1.79 1.11z"/><path d="M6 16h.01M10 16h.01"/></svg>
<div class="t" style="left:1724px;top:950.84px;font-size:12px;line-height:12px;font-weight:700;color:#c53030;">83%</div>
<div class="t" style="left:1713px;top:950.84px;width:100px;text-align:right;font-size:12px;line-height:12px;color:#718096">197GB</div>
<div class="b" style="left:1708px;top:969.0px;width:105.5px;height:4px;border-radius:2px;background:#edf2f7"></div><div class="b" style="left:1708px;top:969.0px;width:87.6px;height:4px;border-radius:2px;background:#e53e3e"></div>
<div class="t" style="left:1846px;top:953.95px;font-size:14px;line-height:14px;font-weight:400;color:#1a202c;">Windows Defender</div>
<div class="b" style="left:292px;top:986px;width:1700px;height:49px;background:#f7fafc;border-bottom:1px solid #edf2f7"></div>
<div class="b" style="left:308px;top:1001.5px;width:16px;height:16px;border:2px solid #e2e8f0;border-radius:3px;background:#fff"></div>
<div class="b" style="left:356px;top:1005.5px;width:8px;height:8px;border-radius:50%;background:#38a169"></div>
<div class="b" style="left:372px;top:997.5px;width:61px;height:24px;border-radius:6px;background:#c6f6d5"></div>
<div class="t" style="left:380px;top:1003.84px;font-size:12px;line-height:12px;font-weight:400;color:#22543d;">ONLINE</div>
<svg class="a" style="left:471px;top:998.0px" width="24" height="24" viewBox="0 0 24 24"><path fill="#38a169" d="M23 12l-2.44-2.79.34-3.69-3.61-.82-1.89-3.2L12 2.96 8.6 1.5 6.71 4.69 3.1 5.5l.34 3.7L1 12l2.44 2.79-.34 3.7 3.61.82L8.6 22.5l3.4-1.47 3.4 1.46 1.89-3.19 3.61-.82-.34-3.69L23 12z"/><path fill="none" stroke="#fff" stroke-width="2.2" stroke-linecap="round" stroke-linejoin="round" d="M7.9 12.7l2.1 2.5 6.2-6.3"/></svg>
<div class="b" style="left:550px;top:997.5px;width:24px;height:24px;border-radius:50%;background:#3182ce"></div>
<div class="t" style="left:550px;top:1004.5px;width:24px;text-align:center;font-size:9.6px;line-height:10px;color:#1a202c">O</div>
<div class="t" style="left:582.6px;top:995.15px;font-size:14px;line-height:14px;font-weight:400;color:#1a202c;">OSMANBORA</div>
<div class="t" style="left:582.6px;top:1011.84px;font-size:12px;line-height:12px;font-weight:400;color:#718096;">OSMANBORA$</div>
<svg class="a" style="left:757px;top:1003.5px;" width="12" height="12" viewBox="0 0 24 24" fill="none" stroke="#a0aec0" stroke-width="1.6" stroke-linecap="round" stroke-linejoin="round"><path d="M17 21v-2a4 4 0 0 0-4-4H5a4 4 0 0 0-4 4v2"/><circle cx="9" cy="7" r="4"/><path d="M23 21v-2a4 4 0 0 0-3-3.87"/><path d="M16 3.13a4 4 0 0 1 0 7.75"/></svg>
<div class="t" style="left:773px;top:1002.95px;font-size:14px;line-height:14px;font-weight:400;color:#1a202c;">OSMANBORA$</div>
<div class="b" style="left:955px;top:997.5px;width:24px;height:24px;border-radius:6px;background:#c6f6d5"></div>
<div class="t" style="left:962.5px;top:1003.30px;font-size:13px;line-height:13px;font-weight:400;color:#2f855a;">C</div>
<div class="t" style="left:983.4px;top:1002.95px;font-size:14px;line-height:14px;font-weight:400;color:#1a202c;">DALGIÇ KALIP BURSA</div>
<div class="b" style="left:1165px;top:997.0px;width:60px;height:25px;border:1px solid #90cdf4;border-radius:6px;background:#ebf8ff"></div>
<div class="t" style="left:1174.3px;top:1003.84px;font-size:12px;line-height:12px;font-weight:400;color:#2c5282;">V1.0.52</div>
<div class="t" style="left:1291px;top:1003.84px;font-size:12px;line-height:12px;font-weight:400;color:#a0aec0;">-</div>
<svg class="a" style="left:1414px;top:1000.0px;" width="12" height="12" viewBox="0 0 24 24" fill="none" stroke="#38a169" stroke-width="2" stroke-linecap="round" stroke-linejoin="round"><rect x="4" y="4" width="16" height="16" rx="2"/><rect x="9" y="9" width="6" height="6"/><path d="M9 1v3M15 1v3M9 20v3M15 20v3M20 9h3M20 14h3M1 9h3M1 14h3"/></svg>
<div class="t" style="left:1430px;top:999.84px;font-size:12px;line-height:12px;font-weight:700;color:#2f855a;">2.0%</div>
<div class="b" style="left:1414px;top:1018.0px;width:102.5px;height:4px;border-radius:2px;background:#edf2f7"></div><div class="b" style="left:1414px;top:1018.0px;width:3.0px;height:4px;border-radius:2px;background:#38a169"></div>
<div class="t" style="left:1549px;top:999.84px;font-size:12px;line-height:12px;font-weight:700;color:#2f855a;">42%</div>
<div class="t" style="left:1575px;top:999.84px;width:100px;text-align:right;font-size:12px;line-height:12px;color:#718096">5.0GB</div>
<div class="b" style="left:1549px;top:1018.0px;width:126.5px;height:4px;border-radius:2px;background:#edf2f7"></div><div class="b" style="left:1549px;top:1018.0px;width:53.1px;height:4px;border-radius:2px;background:#38a169"></div>
<svg class="a" style="left:1708px;top:1000.0px;" width="12" height="12" viewBox="0 0 24 24" fill="none" stroke="#38a169" stroke-width="2" stroke-linecap="round" stroke-linejoin="round"><path d="M22 12H2"/><path d="M5.45 5.11L2 12v6a2 2 0 0 0 2 2h16a2 2 0 0 0 2-2v-6l-3.45-6.89A2 2 0 0 0 16.76 4H7.24a2 2 0 0 0-1.79 1.11z"/><path d="M6 16h.01M10 16h.01"/></svg>
<div class="t" style="left:1724px;top:999.84px;font-size:12px;line-height:12px;font-weight:700;color:#2f855a;">30%</div>
<div class="t" style="left:1713px;top:999.84px;width:100px;text-align:right;font-size:12px;line-height:12px;color:#718096">72GB</div>
<div class="b" style="left:1708px;top:1018.0px;width:105.5px;height:4px;border-radius:2px;background:#edf2f7"></div><div class="b" style="left:1708px;top:1018.0px;width:31.6px;height:4px;border-radius:2px;background:#38a169"></div>
<div class="t" style="left:1846px;top:1002.95px;font-size:14px;line-height:14px;font-weight:400;color:#1a202c;">Windows Defender</div>
</div>
<div class="b" style="left:0;top:992px;width:1920px;height:23px;background:linear-gradient(180deg,rgba(0,0,0,0) 0%,rgba(0,0,0,.05) 50%,rgba(0,0,0,.2) 100%)"></div>
<div class="b" style="left:0;top:1015px;width:1920px;height:65px;background:#1a202c"></div>
<svg class="a" style="left:284px;top:1036px;" width="24" height="24" viewBox="0 0 24 24" fill="none" stroke="#ecc94b" stroke-width="2" stroke-linecap="round" stroke-linejoin="round"><path d="M12 22s8-4 8-10V5l-8-3-8 3v7c0 6 8 10 8 10z"/></svg>
<div class="t" style="left:320px;top:1041.15px;font-size:14px;line-height:14px;font-weight:400;color:#e2e8f0;">Bu site, deneyiminizi iyileştirmek için çerezleri kullanmaktadır. <span style="color:#63b3ed;text-decoration:underline">Daha Fazla Bilgi</span></div>
<div class="b" style="left:1412px;top:1032px;width:131px;height:32px;border:1px solid #4a5568;border-radius:6px"></div>
<div class="t" style="left:1425.5px;top:1041.15px;font-size:14px;line-height:14px;font-weight:700;color:#e2e8f0;">Sadece Zorunlu</div>
<div class="b" style="left:1555px;top:1032px;width:81px;height:32px;border-radius:6px;background:#3182ce"></div>
<div class="t" style="left:1567.5px;top:1041.15px;font-size:14px;line-height:14px;font-weight:700;color:#fff;">Kabul Et</div>
</body></html>
